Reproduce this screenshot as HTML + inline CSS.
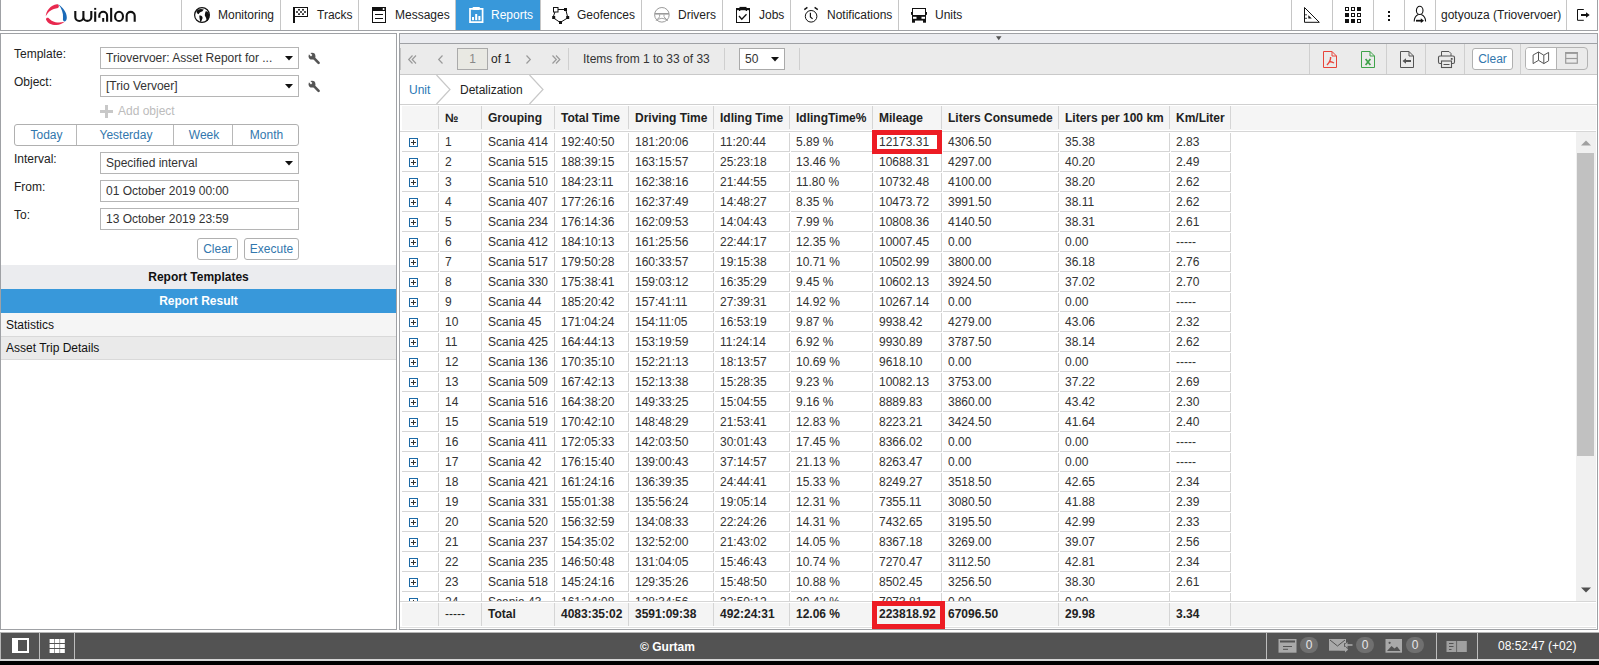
<!DOCTYPE html><html><head><meta charset="utf-8"><title>Wialon</title><style>
*{box-sizing:border-box;margin:0;padding:0}
html,body{width:1599px;height:665px;overflow:hidden;background:#fff}
body{position:relative;font-family:"Liberation Sans",sans-serif;font-size:12px;color:#333}
.a{position:absolute}
.t{position:absolute;line-height:14px;white-space:nowrap}
svg{position:absolute;overflow:visible}
.hl{position:absolute;height:1px}
.vl{position:absolute;width:1px}
</style></head><body>
<div class="a" style="left:0px;top:0px;width:1px;height:31px;background:#9fa1a5"></div>
<div class="a" style="left:0px;top:30px;width:1598px;height:1px;background:#9fa1a5"></div>
<div class="a" style="left:1597px;top:0px;width:1px;height:31px;background:#9fa1a5"></div>
<div class="a" style="left:181px;top:0px;width:1px;height:30px;background:#c6c6c6"></div>
<div class="a" style="left:280px;top:0px;width:1px;height:30px;background:#c6c6c6"></div>
<div class="a" style="left:358px;top:0px;width:1px;height:30px;background:#c6c6c6"></div>
<div class="a" style="left:455px;top:0px;width:1px;height:30px;background:#c6c6c6"></div>
<div class="a" style="left:540px;top:0px;width:1px;height:30px;background:#c6c6c6"></div>
<div class="a" style="left:641px;top:0px;width:1px;height:30px;background:#c6c6c6"></div>
<div class="a" style="left:722px;top:0px;width:1px;height:30px;background:#c6c6c6"></div>
<div class="a" style="left:790px;top:0px;width:1px;height:30px;background:#c6c6c6"></div>
<div class="a" style="left:898px;top:0px;width:1px;height:30px;background:#c6c6c6"></div>
<div class="a" style="left:1291px;top:0px;width:1px;height:30px;background:#c6c6c6"></div>
<div class="a" style="left:1332px;top:0px;width:1px;height:30px;background:#c6c6c6"></div>
<div class="a" style="left:1373px;top:0px;width:1px;height:30px;background:#c6c6c6"></div>
<div class="a" style="left:1404px;top:0px;width:1px;height:30px;background:#c6c6c6"></div>
<div class="a" style="left:1435px;top:0px;width:1px;height:30px;background:#c6c6c6"></div>
<div class="a" style="left:1566px;top:0px;width:1px;height:30px;background:#c6c6c6"></div>
<div class="a" style="left:456px;top:0px;width:84px;height:30px;background:#3898da"></div>
<svg style="left:40px;top:0px" width="100" height="30" viewBox="40 0 100 30">
<path d="M45.8 16.3 C45.8 11.5 50.5 5 57 4.3 C59 4.2 59.6 6.8 58 7.9 C52 8.8 48 11.5 45.8 16.3 Z" fill="#e8294f"/>
<path d="M46 19.5 C47.5 23.5 52 25.2 56.5 25 C59.5 24.9 62.5 23.7 64.6 21.8 C61.5 22.6 58.5 22.8 55.5 22.2 C52.5 21.5 50.5 20 48.8 18.2 C47.8 17.2 45.8 17.8 46 19.5 Z" fill="#e8294f"/>
<path d="M58.3 4.3 C62.8 7.5 67 12.3 66.8 17.8 C66.7 19.8 66 21.3 64.8 21.5 C63.3 21.5 62.6 20.3 63 18 C63.5 13 61.5 8.2 58.3 4.3 Z" fill="#1a6ab8"/>
<g fill="none" stroke="#111" stroke-width="2.1">
<path d="M75.3 11 V16.95 A4.05 4.05 0 0 0 83.4 16.95 V11 M83.4 16.95 A3.95 3.95 0 0 0 91.3 16.95 V11"/>
<path d="M95.2 11.5 V21.8"/>
<path d="M99.3 17.65 V15.65 A3.9 3.9 0 0 1 107.1 15.65 V21.8"/>
<path d="M111.15 7.9 V21.8"/>
<ellipse cx="119.03" cy="16.4" rx="3.95" ry="4.65"/>
<path d="M126.65 21.8 V15.75 A4.03 4.03 0 0 1 134.7 15.75 V21.8"/>
</g>
<rect x="94.2" y="7.9" width="2" height="1.9" fill="#111"/>
<rect x="102.2" y="18" width="2" height="3.8" fill="#111"/>
</svg>
<span class="t " style="left:218px;top:8px;color:#222">Monitoring</span>
<span class="t " style="left:317px;top:8px;color:#222">Tracks</span>
<span class="t " style="left:395px;top:8px;color:#222">Messages</span>
<span class="t " style="left:491px;top:8px;color:#fff">Reports</span>
<span class="t " style="left:577px;top:8px;color:#222">Geofences</span>
<span class="t " style="left:678px;top:8px;color:#222">Drivers</span>
<span class="t " style="left:759px;top:8px;color:#222">Jobs</span>
<span class="t " style="left:827px;top:8px;color:#222">Notifications</span>
<span class="t " style="left:935px;top:8px;color:#222">Units</span>
<svg style="left:194px;top:7px" width="16" height="16" viewBox="0 0 16 16"><circle cx="8" cy="8" r="7.4" fill="none" stroke="#111" stroke-width="1.2"/><path d="M2.3 4.2 C4 2 7 1.4 9.8 2.6 L8.2 4.6 C6.7 5 5.6 5.6 4.6 7.2 L3 6.2 Z M5.3 8.6 C7 8 8.6 9 8.6 11 C8.2 12.6 7.5 13.6 6.6 15.6 C6 13.6 5.3 11 5.3 8.6 Z M11.6 4.4 C13.2 4 14.6 5.6 15.2 7.6 L15.2 11 C14.6 13 13.6 14 12.6 14.6 C12.6 12 12 10 11 9 C10.6 8 11 6 11.6 4.4 Z" fill="#111"/></svg>
<svg style="left:290px;top:4px" width="20" height="21" viewBox="290 4 20 21"><rect x="293" y="7" width="2" height="16" fill="#111"/><rect x="293.5" y="7.5" width="14" height="9" fill="none" stroke="#111" stroke-width="1"/><rect x="298.15" y="8.950000000000001" width="1.7" height="1.7" fill="#111"/><rect x="302.15" y="8.950000000000001" width="1.7" height="1.7" fill="#111"/><rect x="296.15" y="11.15" width="1.7" height="1.7" fill="#111"/><rect x="300.15" y="11.15" width="1.7" height="1.7" fill="#111"/><rect x="304.15" y="11.15" width="1.7" height="1.7" fill="#111"/><rect x="298.15" y="13.25" width="1.7" height="1.7" fill="#111"/><rect x="302.15" y="13.25" width="1.7" height="1.7" fill="#111"/></svg>
<svg style="left:370px;top:5px" width="18" height="20" viewBox="370 5 18 20"><rect x="372.5" y="7.5" width="13" height="15" fill="none" stroke="#111" stroke-width="1"/><rect x="372" y="7" width="14" height="4" fill="#111"/>
<rect x="382.6" y="8.1" width="2" height="1.9" rx="0.8" fill="#fff"/><path d="M375 14.5 H383 M375 18.5 H383" stroke="#111" stroke-width="1"/></svg>
<svg style="left:466px;top:4px" width="20" height="21" viewBox="466 4 20 21"><path d="M473 8.9 H470 V22.1 H482.6 V8.9 H479.5" fill="none" stroke="#fff" stroke-width="1.7"/><rect x="472.5" y="7" width="7.5" height="3" rx="1" fill="#fff"/>
<rect x="472" y="17" width="2" height="3.2" fill="#fff"/><rect x="475.2" y="14" width="2" height="6.2" fill="#fff"/><rect x="478.4" y="16" width="2" height="4.2" fill="#fff"/></svg>
<svg style="left:550px;top:5px" width="22" height="21" viewBox="550 5 22 21"><path d="M558 9.5 H564.5 M566 10.5 L567.5 16.5 M567 18.3 L561 22 M559.5 22 L554 18.3 M553.5 16.2 L555 11.8" fill="none" stroke="#111" stroke-width="1"/>
<rect x="553.5" y="7.5" width="4.5" height="4.5" fill="#fff" stroke="#111" stroke-width="1"/>
<rect x="564" y="8" width="3" height="3" fill="#111"/><rect x="566.2" y="16" width="3" height="3" fill="#111"/><rect x="559" y="21" width="3" height="3" fill="#111"/><rect x="552.2" y="16" width="3" height="3" fill="#111"/></svg>
<svg style="left:652px;top:5px" width="20" height="20" viewBox="652 5 20 20"><circle cx="661.9" cy="14.8" r="7.3" fill="none" stroke="#9a9a9a" stroke-width="1"/>
<path d="M654.8 13.8 H669" stroke="#9a9a9a" stroke-width="1.6"/><path d="M659.6 14.5 V16.8 M664 14.5 V16.8" stroke="#9a9a9a" stroke-width="0.9"/>
<path d="M659.5 17 L656 20.8 M664.2 17 L667.7 20.8" stroke="#9a9a9a" stroke-width="1"/><path d="M657.8 19.3 Q661.9 17.2 666 19.3" fill="none" stroke="#9a9a9a" stroke-width="0.9"/></svg>
<svg style="left:734px;top:5px" width="18" height="20" viewBox="734 5 18 20"><rect x="736.5" y="8.5" width="13" height="14" fill="none" stroke="#111" stroke-width="1"/><rect x="736" y="8" width="14" height="2.2" fill="#111"/>
<rect x="739.5" y="6.9" width="7" height="2" fill="#111"/><rect x="739" y="10" width="1.3" height="1" fill="#111"/><rect x="745.7" y="10" width="1.3" height="1" fill="#111"/>
<path d="M739 16 L741.8 19.2 L746.5 14.3" fill="none" stroke="#111" stroke-width="1.3"/></svg>
<svg style="left:802px;top:5px" width="18" height="20" viewBox="802 5 18 20"><circle cx="811.1" cy="16.3" r="5.8" fill="none" stroke="#111" stroke-width="1"/>
<path d="M810.4 12.8 V17 L812.6 18.9" fill="none" stroke="#111" stroke-width="1.2"/>
<path d="M804.3 9.6 L807.4 7.4 M814.6 7.4 L817.8 9.6" stroke="#111" stroke-width="1.4"/></svg>
<svg style="left:909px;top:6px" width="20" height="19" viewBox="909 6 20 19"><rect x="912.5" y="8.5" width="13" height="7" fill="none" stroke="#111" stroke-width="1"/><rect x="912" y="15" width="14" height="5.6" fill="#111"/>
<rect x="913" y="16.8" width="3.5" height="2" fill="#fff"/><rect x="921.5" y="16.8" width="3.5" height="2" fill="#fff"/>
<rect x="912" y="20" width="3" height="2.7" fill="#111"/><rect x="923" y="20" width="3" height="2.7" fill="#111"/>
<rect x="911" y="12" width="1.5" height="2.8" fill="#111"/><rect x="925.5" y="12" width="1.5" height="2.8" fill="#111"/></svg>
<svg style="left:1302px;top:5px" width="20" height="20" viewBox="1302 5 20 20"><path d="M1304.5 7.5 V22.3 H1319.3 Z" fill="none" stroke="#111" stroke-width="1" stroke-linejoin="miter"/>
<path d="M1308.3 15.3 V18.6 H1311.8 Z" fill="#111"/><path d="M1304.5 14.8 H1307 M1304.5 18.3 H1307" stroke="#111" stroke-width="0.8"/></svg>
<svg style="left:1343px;top:5px" width="20" height="20" viewBox="1343 5 20 20"><rect x="1345.5" y="7.5" width="3" height="3" fill="none" stroke="#111" stroke-width="1"/><rect x="1351.5" y="7.5" width="3" height="3" fill="none" stroke="#111" stroke-width="1"/><rect x="1357" y="7" width="4" height="4" fill="#111"/><rect x="1345" y="13" width="4" height="4" fill="#111"/><rect x="1351.5" y="13.5" width="3" height="3" fill="none" stroke="#111" stroke-width="1"/><rect x="1357.5" y="13.5" width="3" height="3" fill="none" stroke="#111" stroke-width="1"/><rect x="1345" y="19" width="4" height="4" fill="#111"/><rect x="1351" y="19" width="4" height="4" fill="#111"/><rect x="1357.5" y="19.5" width="3" height="3" fill="none" stroke="#111" stroke-width="1"/></svg>
<svg style="left:1386px;top:9px" width="5" height="14" viewBox="1386 9 5 14"><rect x="1388" y="11" width="2" height="2" fill="#111"/><rect x="1388" y="15" width="2" height="2" fill="#111"/><rect x="1388" y="19" width="2" height="2" fill="#111"/></svg>
<svg style="left:1411px;top:4px" width="18" height="21" viewBox="1411 4 18 21"><ellipse cx="1419.7" cy="10.4" rx="3.3" ry="4.1" fill="none" stroke="#111" stroke-width="1.1"/>
<path d="M1414.2 21.6 C1414.2 17.5 1415.5 16 1418.3 14.6 M1425.6 21.6 C1425.6 17.5 1424.3 16 1421.3 14.6" fill="none" stroke="#111" stroke-width="1.1"/>
<path d="M1416 20.7 H1421.5" stroke="#111" stroke-width="1.8"/><path d="M1420.8 18.3 L1424 20.7 L1420.8 23.1 Z" fill="#111"/></svg>
<span class="t " style="left:1441px;top:8px;color:#222">gotyouza (Triovervoer)</span>
<svg style="left:1575px;top:7px" width="17" height="16" viewBox="1575 7 17 16"><path d="M1583.8 9.5 H1577.5 V20.3 H1583.8" fill="none" stroke="#111" stroke-width="1"/>
<path d="M1581 15 H1587" stroke="#111" stroke-width="2"/><path d="M1586 12.3 L1589.7 15 L1586 17.7 Z" fill="#111"/></svg>
<div class="a" style="left:0px;top:33px;width:397px;height:597px;border:1px solid #9fa1a5;background:#fff"></div>
<span class="t " style="left:14px;top:47px;color:#222">Template:</span>
<div class="a" style="left:100px;top:47px;width:199px;height:22px;border:1px solid #b5b5b5;background:#fff"></div>
<span class="t " style="left:106px;top:51px;color:#333">Triovervoer: Asset Report for ...</span>
<svg style="left:285px;top:56px" width="8" height="5" viewBox="0 0 8 5"><path d="M0 0 H8 L4 4.5Z" fill="#111"/></svg>
<svg style="left:308px;top:52px" width="13" height="13" viewBox="0 0 13 13">
<circle cx="4" cy="4.2" r="3.4" fill="#555"/><path d="M4.5 4.7 L10.6 10.9" stroke="#555" stroke-width="2.6" stroke-linecap="round"/>
<path d="M0.2 1.6 L1.6 0.2 L4.4 3 L3 4.4 Z" fill="#fff"/>
</svg>
<span class="t " style="left:14px;top:75px;color:#222">Object:</span>
<div class="a" style="left:100px;top:75px;width:199px;height:22px;border:1px solid #b5b5b5;background:#fff"></div>
<span class="t " style="left:106px;top:79px;color:#333">[Trio Vervoer]</span>
<svg style="left:285px;top:84px" width="8" height="5" viewBox="0 0 8 5"><path d="M0 0 H8 L4 4.5Z" fill="#111"/></svg>
<svg style="left:308px;top:80px" width="13" height="13" viewBox="0 0 13 13">
<circle cx="4" cy="4.2" r="3.4" fill="#555"/><path d="M4.5 4.7 L10.6 10.9" stroke="#555" stroke-width="2.6" stroke-linecap="round"/>
<path d="M0.2 1.6 L1.6 0.2 L4.4 3 L3 4.4 Z" fill="#fff"/>
</svg>
<svg style="left:100px;top:105px" width="13" height="13" viewBox="0 0 13 13"><rect x="5" y="0" width="3" height="13" fill="#c8c8c8"/><rect x="0" y="5" width="13" height="3" fill="#c8c8c8"/></svg>
<span class="t " style="left:118px;top:104px;color:#bcbcbc">Add object</span>
<div class="a" style="left:14px;top:124px;width:285px;height:22px;border:1px solid #b0b0b0;border-radius:3px;background:#fff"></div>
<div class="a" style="left:76px;top:125px;width:1px;height:20px;background:#b8b8b8"></div>
<div class="a" style="left:173px;top:125px;width:1px;height:20px;background:#b8b8b8"></div>
<div class="a" style="left:232px;top:125px;width:1px;height:20px;background:#b8b8b8"></div>
<span class="t" style="left:15px;width:61px;text-align:center;top:128px;color:#3277ad;padding-left:2px">Today</span>
<span class="t" style="left:77px;width:96px;text-align:center;top:128px;color:#3277ad;padding-left:2px">Yesterday</span>
<span class="t" style="left:174px;width:58px;text-align:center;top:128px;color:#3277ad;padding-left:2px">Week</span>
<span class="t" style="left:233px;width:65px;text-align:center;top:128px;color:#3277ad;padding-left:2px">Month</span>
<span class="t " style="left:14px;top:152px;color:#222">Interval:</span>
<div class="a" style="left:100px;top:152px;width:199px;height:22px;border:1px solid #b5b5b5;background:#fff"></div>
<span class="t " style="left:106px;top:156px;color:#333">Specified interval</span>
<svg style="left:285px;top:161px" width="8" height="5" viewBox="0 0 8 5"><path d="M0 0 H8 L4 4.5Z" fill="#111"/></svg>
<span class="t " style="left:14px;top:180px;color:#222">From:</span>
<div class="a" style="left:100px;top:180px;width:199px;height:22px;border:1px solid #b5b5b5;background:#fff"></div>
<span class="t " style="left:106px;top:184px;color:#333">01 October 2019 00:00</span>
<span class="t " style="left:14px;top:208px;color:#222">To:</span>
<div class="a" style="left:100px;top:208px;width:199px;height:22px;border:1px solid #b5b5b5;background:#fff"></div>
<span class="t " style="left:106px;top:212px;color:#333">13 October 2019 23:59</span>
<div class="a" style="left:197px;top:238px;width:41px;height:22px;border:1px solid #b0b0b0;border-radius:3px;background:#fff"></div>
<span class="t" style="left:197px;width:41px;text-align:center;top:242px;color:#3277ad">Clear</span>
<div class="a" style="left:244px;top:238px;width:55px;height:22px;border:1px solid #b0b0b0;border-radius:3px;background:#fff"></div>
<span class="t" style="left:244px;width:55px;text-align:center;top:242px;color:#3277ad">Execute</span>
<div class="a" style="left:1px;top:265px;width:395px;height:24px;background:#ebecef"></div>
<span class="t" style="left:1px;width:395px;text-align:center;top:270px;font-weight:bold;color:#111">Report Templates</span>
<div class="a" style="left:1px;top:289px;width:395px;height:24px;background:#3898da"></div>
<span class="t" style="left:1px;width:395px;text-align:center;top:294px;font-weight:bold;color:#fff">Report Result</span>
<div class="a" style="left:1px;top:313px;width:395px;height:24px;background:#f5f5f5;border-bottom:1px solid #d9d9d9"></div>
<span class="t " style="left:6px;top:318px;color:#111">Statistics</span>
<div class="a" style="left:1px;top:337px;width:395px;height:23px;background:#eaeaea;border-bottom:1px solid #d9d9d9"></div>
<span class="t " style="left:6px;top:341px;color:#111">Asset Trip Details</span>
<div class="a" style="left:399px;top:33px;width:1199px;height:597px;border:1px solid #9fa1a5;background:#fff"></div>
<div class="a" style="left:400px;top:34px;width:1197px;height:9px;background:#ebecf0"></div>
<div class="a" style="left:400px;top:43px;width:1197px;height:1px;background:#9fa1a5"></div>
<svg style="left:996px;top:36px" width="6" height="5" viewBox="0 0 6 5"><path d="M0 0.3H5.5L2.75 4.3Z" fill="#555"/></svg>
<div class="a" style="left:400px;top:44px;width:1197px;height:30px;background:#ebebeb"></div>
<div class="a" style="left:400px;top:74px;width:1197px;height:1px;background:#c9c9c9"></div>
<div class="a" style="left:568px;top:48px;width:1px;height:22px;background:#cfcfcf"></div>
<div class="a" style="left:724px;top:48px;width:1px;height:22px;background:#cfcfcf"></div>
<div class="a" style="left:799px;top:48px;width:1px;height:22px;background:#cfcfcf"></div>
<div class="a" style="left:400px;top:48px;width:1px;height:22px;background:#c4c4c4"></div>
<div class="a" style="left:1309px;top:44px;width:1px;height:30px;background:#cfcfcf"></div>
<div class="a" style="left:1386px;top:44px;width:1px;height:30px;background:#cfcfcf"></div>
<div class="a" style="left:1425px;top:44px;width:1px;height:30px;background:#cfcfcf"></div>
<div class="a" style="left:1464px;top:44px;width:1px;height:30px;background:#cfcfcf"></div>
<div class="a" style="left:1520px;top:44px;width:1px;height:30px;background:#cfcfcf"></div>
<svg style="left:408px;top:55px" width="10" height="9" viewBox="0 0 10 9"><path d="M4.5 0.5 L0.7 4.5 L4.5 8.5" fill="none" stroke="#9a9a9a" stroke-width="1.2"/><path d="M8 0.5 L4.2 4.5 L8 8.5" fill="none" stroke="#9a9a9a" stroke-width="1.2"/></svg>
<svg style="left:438px;top:55px" width="10" height="9" viewBox="0 0 10 9"><path d="M4.5 0.5 L0.7 4.5 L4.5 8.5" fill="none" stroke="#9a9a9a" stroke-width="1.2"/></svg>
<svg style="left:526px;top:55px" width="10" height="9" viewBox="0 0 10 9"><path d="M0.5 0.5 L4.3 4.5 L0.5 8.5" fill="none" stroke="#9a9a9a" stroke-width="1.2"/></svg>
<svg style="left:552px;top:55px" width="10" height="9" viewBox="0 0 10 9"><path d="M0.5 0.5 L4.3 4.5 L0.5 8.5" fill="none" stroke="#9a9a9a" stroke-width="1.2"/><path d="M4 0.5 L7.8 4.5 L4 8.5" fill="none" stroke="#9a9a9a" stroke-width="1.2"/></svg>
<div class="a" style="left:457px;top:48px;width:31px;height:22px;border:1px solid #aaa;background:#e9e9e3"></div>
<span class="t" style="left:457px;width:31px;text-align:center;top:52px;color:#888">1</span>
<span class="t " style="left:491px;top:52px;color:#222">of 1</span>
<span class="t " style="left:583px;top:52px;color:#333">Items from 1 to 33 of 33</span>
<div class="a" style="left:739px;top:48px;width:46px;height:22px;border:1px solid #aaa;background:#fff"></div>
<span class="t " style="left:745px;top:52px;color:#333">50</span>
<svg style="left:771px;top:57px" width="8" height="5" viewBox="0 0 8 5"><path d="M0 0 H8 L4 4.5Z" fill="#111"/></svg>
<svg style="left:1323px;top:51px" width="15" height="18" viewBox="0 0 15 18">
<path d="M0.5 0.5 H9 L13.5 5 V16.5 H0.5 Z M9 0.5 V5 H13.5" fill="none" stroke="#e8443a" stroke-width="1"/><path d="M7.6 6 C7.8 9 6.5 11.5 4 14 M6.8 10.5 C8.2 10.8 9.8 11.3 11 12" fill="none" stroke="#e8443a" stroke-width="1.4"/></svg>
<svg style="left:1361px;top:51px" width="15" height="18" viewBox="0 0 15 18">
<path d="M0.5 0.5 H9 L13.5 5 V16.5 H0.5 Z M9 0.5 V5 H13.5" fill="none" stroke="#3fa34a" stroke-width="1"/><path d="M4.6 8 L9.4 14 M9.4 8 L4.6 14" fill="none" stroke="#3fa34a" stroke-width="1.7"/></svg>
<svg style="left:1400px;top:51px" width="15" height="18" viewBox="0 0 15 18">
<path d="M0.5 0.5 H9 L13.5 5 V16.5 H0.5 Z M9 0.5 V5 H13.5" fill="none" stroke="#555" stroke-width="1"/><path d="M5 10 H11" stroke="#555" stroke-width="2"/><path d="M2.5 10 L6 7.3 V12.7 Z" fill="#555"/></svg>
<svg style="left:1438px;top:51px" width="18" height="18" viewBox="0 0 18 18">
<path d="M3.5 5 V0.5 H11 L13 2.5 V5" fill="none" stroke="#555" stroke-width="1"/>
<path d="M3.5 12.5 H2 Q0.5 12.5 0.5 11 V6.5 Q0.5 5 2 5 H15 Q16.5 5 16.5 6.5 V11 Q16.5 12.5 15 12.5 H13.5" fill="none" stroke="#555" stroke-width="1.1"/>
<rect x="3.5" y="10" width="10" height="6.5" fill="#ebebeb" stroke="#555" stroke-width="1.1"/>
<rect x="12.8" y="7" width="1.8" height="1.8" fill="#555"/><path d="M5.5 13.5 H11.5" stroke="#555" stroke-width="1"/>
</svg>
<div class="a" style="left:1472px;top:48px;width:41px;height:22px;border:1px solid #b0b0b0;border-radius:3px;background:#fff"></div>
<span class="t" style="left:1472px;width:41px;text-align:center;top:52px;color:#3277ad">Clear</span>
<div class="a" style="left:1525px;top:47px;width:63px;height:23px;border:1px solid #b3b3b3;border-radius:4px;background:#ebebeb"></div>
<div class="a" style="left:1526px;top:48px;width:30px;height:21px;background:#fff;border-radius:3px 0 0 3px"></div>
<div class="a" style="left:1556px;top:48px;width:1px;height:21px;background:#b3b3b3"></div>
<svg style="left:1530px;top:50px" width="22" height="16" viewBox="1530 50 22 16">
<path d="M1533.1 55 L1538.5 52 L1543.8 55.2 L1548.6 52.4 V60.8 L1543.8 63.6 L1538.5 60.3 L1533.1 63.6 Z M1538.5 52 V60.3 M1543.8 55.2 V63.6" fill="none" stroke="#555" stroke-width="1" stroke-linejoin="round"/></svg>
<svg style="left:1563px;top:50px" width="17" height="16" viewBox="1563 50 17 16">
<rect x="1565.7" y="52.6" width="11.6" height="10.6" fill="none" stroke="#9a9a9a" stroke-width="1.2"/><rect x="1565.2" y="52.1" width="12.6" height="1.8" fill="#9a9a9a"/><path d="M1565.7 58.5 H1577.3" stroke="#9a9a9a" stroke-width="1.2"/></svg>
<span class="t " style="left:409px;top:83px;color:#2a78b5">Unit</span>
<svg style="left:436px;top:75px" width="15" height="29" viewBox="0 0 15 29"><path d="M0.5 0 L14 14.5 L0.5 29" fill="none" stroke="#c8c8c8" stroke-width="1.2"/></svg>
<span class="t " style="left:460px;top:83px;color:#222">Detalization</span>
<svg style="left:529px;top:75px" width="15" height="29" viewBox="0 0 15 29"><path d="M0.5 0 L14 14.5 L0.5 29" fill="none" stroke="#c8c8c8" stroke-width="1.2"/></svg>
<div class="a" style="left:400px;top:104px;width:1197px;height:1px;background:#d0d0d0"></div>
<div class="a" style="left:400px;top:105px;width:1196px;height:25px;background:#fff"></div>
<div class="a" style="left:402px;top:106px;width:1194px;height:24px;background:#f5f5f5"></div>
<div class="a" style="left:438px;top:106px;width:1px;height:23px;background:#d5d5d5"></div>
<div class="a" style="left:481px;top:106px;width:1px;height:23px;background:#d5d5d5"></div>
<div class="a" style="left:554px;top:106px;width:1px;height:23px;background:#d5d5d5"></div>
<div class="a" style="left:628px;top:106px;width:1px;height:23px;background:#d5d5d5"></div>
<div class="a" style="left:713px;top:106px;width:1px;height:23px;background:#d5d5d5"></div>
<div class="a" style="left:789px;top:106px;width:1px;height:23px;background:#d5d5d5"></div>
<div class="a" style="left:872px;top:106px;width:1px;height:23px;background:#d5d5d5"></div>
<div class="a" style="left:941px;top:106px;width:1px;height:23px;background:#d5d5d5"></div>
<div class="a" style="left:1058px;top:106px;width:1px;height:23px;background:#d5d5d5"></div>
<div class="a" style="left:1169px;top:106px;width:1px;height:23px;background:#d5d5d5"></div>
<div class="a" style="left:1230px;top:106px;width:1px;height:23px;background:#d5d5d5"></div>
<span class="t " style="left:445px;top:111px;font-weight:bold;color:#222">№</span>
<span class="t " style="left:488px;top:111px;font-weight:bold;color:#222">Grouping</span>
<span class="t " style="left:561px;top:111px;font-weight:bold;color:#222">Total Time</span>
<span class="t " style="left:635px;top:111px;font-weight:bold;color:#222">Driving Time</span>
<span class="t " style="left:720px;top:111px;font-weight:bold;color:#222">Idling Time</span>
<span class="t " style="left:796px;top:111px;font-weight:bold;color:#222">IdlingTime%</span>
<span class="t " style="left:879px;top:111px;font-weight:bold;color:#222">Mileage</span>
<span class="t " style="left:948px;top:111px;font-weight:bold;color:#222">Liters Consumede</span>
<span class="t " style="left:1065px;top:111px;font-weight:bold;color:#222">Liters per 100 km</span>
<span class="t " style="left:1176px;top:111px;font-weight:bold;color:#222">Km/Liter</span>
<div class="a" style="left:400px;top:131px;width:1196px;height:1px;background:#d6d6d6"></div>
<div class="a" style="left:400px;top:132px;width:1176px;height:469px;overflow:hidden">
<div class="a" style="left:2px;top:1px;width:37px;height:19px;border-right:1px solid #d5d5d5;border-bottom:1px solid #d5d5d5"></div>
<div class="a" style="left:40px;top:1px;width:42px;height:19px;border-right:1px solid #d5d5d5;border-bottom:1px solid #d5d5d5"></div>
<div class="a" style="left:83px;top:1px;width:72px;height:19px;border-right:1px solid #d5d5d5;border-bottom:1px solid #d5d5d5"></div>
<div class="a" style="left:156px;top:1px;width:73px;height:19px;border-right:1px solid #d5d5d5;border-bottom:1px solid #d5d5d5"></div>
<div class="a" style="left:230px;top:1px;width:84px;height:19px;border-right:1px solid #d5d5d5;border-bottom:1px solid #d5d5d5"></div>
<div class="a" style="left:315px;top:1px;width:75px;height:19px;border-right:1px solid #d5d5d5;border-bottom:1px solid #d5d5d5"></div>
<div class="a" style="left:391px;top:1px;width:82px;height:19px;border-right:1px solid #d5d5d5;border-bottom:1px solid #d5d5d5"></div>
<div class="a" style="left:474px;top:1px;width:68px;height:19px;border-right:1px solid #d5d5d5;border-bottom:1px solid #d5d5d5"></div>
<div class="a" style="left:543px;top:1px;width:116px;height:19px;border-right:1px solid #d5d5d5;border-bottom:1px solid #d5d5d5"></div>
<div class="a" style="left:660px;top:1px;width:110px;height:19px;border-right:1px solid #d5d5d5;border-bottom:1px solid #d5d5d5"></div>
<div class="a" style="left:771px;top:1px;width:60px;height:19px;border-right:1px solid #d5d5d5;border-bottom:1px solid #d5d5d5"></div>
<svg style="left:9px;top:6px" width="9" height="9" viewBox="0 0 9 9"><rect x="0.5" y="0.5" width="8" height="8" fill="#fff" stroke="#1b69a6" stroke-width="1"/><path d="M4.5 2 V7 M2 4.5 H7" stroke="#333" stroke-width="1"/></svg>
<span class="t" style="left:45px;top:3px;color:#333">1</span>
<span class="t" style="left:88px;top:3px;color:#333">Scania 414</span>
<span class="t" style="left:161px;top:3px;color:#333">192:40:50</span>
<span class="t" style="left:235px;top:3px;color:#333">181:20:06</span>
<span class="t" style="left:320px;top:3px;color:#333">11:20:44</span>
<span class="t" style="left:396px;top:3px;color:#333">5.89 %</span>
<span class="t" style="left:479px;top:3px;color:#333">12173.31</span>
<span class="t" style="left:548px;top:3px;color:#333">4306.50</span>
<span class="t" style="left:665px;top:3px;color:#333">35.38</span>
<span class="t" style="left:776px;top:3px;color:#333">2.83</span>
<div class="a" style="left:2px;top:21px;width:37px;height:19px;border-right:1px solid #d5d5d5;border-bottom:1px solid #d5d5d5"></div>
<div class="a" style="left:40px;top:21px;width:42px;height:19px;border-right:1px solid #d5d5d5;border-bottom:1px solid #d5d5d5"></div>
<div class="a" style="left:83px;top:21px;width:72px;height:19px;border-right:1px solid #d5d5d5;border-bottom:1px solid #d5d5d5"></div>
<div class="a" style="left:156px;top:21px;width:73px;height:19px;border-right:1px solid #d5d5d5;border-bottom:1px solid #d5d5d5"></div>
<div class="a" style="left:230px;top:21px;width:84px;height:19px;border-right:1px solid #d5d5d5;border-bottom:1px solid #d5d5d5"></div>
<div class="a" style="left:315px;top:21px;width:75px;height:19px;border-right:1px solid #d5d5d5;border-bottom:1px solid #d5d5d5"></div>
<div class="a" style="left:391px;top:21px;width:82px;height:19px;border-right:1px solid #d5d5d5;border-bottom:1px solid #d5d5d5"></div>
<div class="a" style="left:474px;top:21px;width:68px;height:19px;border-right:1px solid #d5d5d5;border-bottom:1px solid #d5d5d5"></div>
<div class="a" style="left:543px;top:21px;width:116px;height:19px;border-right:1px solid #d5d5d5;border-bottom:1px solid #d5d5d5"></div>
<div class="a" style="left:660px;top:21px;width:110px;height:19px;border-right:1px solid #d5d5d5;border-bottom:1px solid #d5d5d5"></div>
<div class="a" style="left:771px;top:21px;width:60px;height:19px;border-right:1px solid #d5d5d5;border-bottom:1px solid #d5d5d5"></div>
<svg style="left:9px;top:26px" width="9" height="9" viewBox="0 0 9 9"><rect x="0.5" y="0.5" width="8" height="8" fill="#fff" stroke="#1b69a6" stroke-width="1"/><path d="M4.5 2 V7 M2 4.5 H7" stroke="#333" stroke-width="1"/></svg>
<span class="t" style="left:45px;top:23px;color:#333">2</span>
<span class="t" style="left:88px;top:23px;color:#333">Scania 515</span>
<span class="t" style="left:161px;top:23px;color:#333">188:39:15</span>
<span class="t" style="left:235px;top:23px;color:#333">163:15:57</span>
<span class="t" style="left:320px;top:23px;color:#333">25:23:18</span>
<span class="t" style="left:396px;top:23px;color:#333">13.46 %</span>
<span class="t" style="left:479px;top:23px;color:#333">10688.31</span>
<span class="t" style="left:548px;top:23px;color:#333">4297.00</span>
<span class="t" style="left:665px;top:23px;color:#333">40.20</span>
<span class="t" style="left:776px;top:23px;color:#333">2.49</span>
<div class="a" style="left:2px;top:41px;width:37px;height:19px;border-right:1px solid #d5d5d5;border-bottom:1px solid #d5d5d5"></div>
<div class="a" style="left:40px;top:41px;width:42px;height:19px;border-right:1px solid #d5d5d5;border-bottom:1px solid #d5d5d5"></div>
<div class="a" style="left:83px;top:41px;width:72px;height:19px;border-right:1px solid #d5d5d5;border-bottom:1px solid #d5d5d5"></div>
<div class="a" style="left:156px;top:41px;width:73px;height:19px;border-right:1px solid #d5d5d5;border-bottom:1px solid #d5d5d5"></div>
<div class="a" style="left:230px;top:41px;width:84px;height:19px;border-right:1px solid #d5d5d5;border-bottom:1px solid #d5d5d5"></div>
<div class="a" style="left:315px;top:41px;width:75px;height:19px;border-right:1px solid #d5d5d5;border-bottom:1px solid #d5d5d5"></div>
<div class="a" style="left:391px;top:41px;width:82px;height:19px;border-right:1px solid #d5d5d5;border-bottom:1px solid #d5d5d5"></div>
<div class="a" style="left:474px;top:41px;width:68px;height:19px;border-right:1px solid #d5d5d5;border-bottom:1px solid #d5d5d5"></div>
<div class="a" style="left:543px;top:41px;width:116px;height:19px;border-right:1px solid #d5d5d5;border-bottom:1px solid #d5d5d5"></div>
<div class="a" style="left:660px;top:41px;width:110px;height:19px;border-right:1px solid #d5d5d5;border-bottom:1px solid #d5d5d5"></div>
<div class="a" style="left:771px;top:41px;width:60px;height:19px;border-right:1px solid #d5d5d5;border-bottom:1px solid #d5d5d5"></div>
<svg style="left:9px;top:46px" width="9" height="9" viewBox="0 0 9 9"><rect x="0.5" y="0.5" width="8" height="8" fill="#fff" stroke="#1b69a6" stroke-width="1"/><path d="M4.5 2 V7 M2 4.5 H7" stroke="#333" stroke-width="1"/></svg>
<span class="t" style="left:45px;top:43px;color:#333">3</span>
<span class="t" style="left:88px;top:43px;color:#333">Scania 510</span>
<span class="t" style="left:161px;top:43px;color:#333">184:23:11</span>
<span class="t" style="left:235px;top:43px;color:#333">162:38:16</span>
<span class="t" style="left:320px;top:43px;color:#333">21:44:55</span>
<span class="t" style="left:396px;top:43px;color:#333">11.80 %</span>
<span class="t" style="left:479px;top:43px;color:#333">10732.48</span>
<span class="t" style="left:548px;top:43px;color:#333">4100.00</span>
<span class="t" style="left:665px;top:43px;color:#333">38.20</span>
<span class="t" style="left:776px;top:43px;color:#333">2.62</span>
<div class="a" style="left:2px;top:61px;width:37px;height:19px;border-right:1px solid #d5d5d5;border-bottom:1px solid #d5d5d5"></div>
<div class="a" style="left:40px;top:61px;width:42px;height:19px;border-right:1px solid #d5d5d5;border-bottom:1px solid #d5d5d5"></div>
<div class="a" style="left:83px;top:61px;width:72px;height:19px;border-right:1px solid #d5d5d5;border-bottom:1px solid #d5d5d5"></div>
<div class="a" style="left:156px;top:61px;width:73px;height:19px;border-right:1px solid #d5d5d5;border-bottom:1px solid #d5d5d5"></div>
<div class="a" style="left:230px;top:61px;width:84px;height:19px;border-right:1px solid #d5d5d5;border-bottom:1px solid #d5d5d5"></div>
<div class="a" style="left:315px;top:61px;width:75px;height:19px;border-right:1px solid #d5d5d5;border-bottom:1px solid #d5d5d5"></div>
<div class="a" style="left:391px;top:61px;width:82px;height:19px;border-right:1px solid #d5d5d5;border-bottom:1px solid #d5d5d5"></div>
<div class="a" style="left:474px;top:61px;width:68px;height:19px;border-right:1px solid #d5d5d5;border-bottom:1px solid #d5d5d5"></div>
<div class="a" style="left:543px;top:61px;width:116px;height:19px;border-right:1px solid #d5d5d5;border-bottom:1px solid #d5d5d5"></div>
<div class="a" style="left:660px;top:61px;width:110px;height:19px;border-right:1px solid #d5d5d5;border-bottom:1px solid #d5d5d5"></div>
<div class="a" style="left:771px;top:61px;width:60px;height:19px;border-right:1px solid #d5d5d5;border-bottom:1px solid #d5d5d5"></div>
<svg style="left:9px;top:66px" width="9" height="9" viewBox="0 0 9 9"><rect x="0.5" y="0.5" width="8" height="8" fill="#fff" stroke="#1b69a6" stroke-width="1"/><path d="M4.5 2 V7 M2 4.5 H7" stroke="#333" stroke-width="1"/></svg>
<span class="t" style="left:45px;top:63px;color:#333">4</span>
<span class="t" style="left:88px;top:63px;color:#333">Scania 407</span>
<span class="t" style="left:161px;top:63px;color:#333">177:26:16</span>
<span class="t" style="left:235px;top:63px;color:#333">162:37:49</span>
<span class="t" style="left:320px;top:63px;color:#333">14:48:27</span>
<span class="t" style="left:396px;top:63px;color:#333">8.35 %</span>
<span class="t" style="left:479px;top:63px;color:#333">10473.72</span>
<span class="t" style="left:548px;top:63px;color:#333">3991.50</span>
<span class="t" style="left:665px;top:63px;color:#333">38.11</span>
<span class="t" style="left:776px;top:63px;color:#333">2.62</span>
<div class="a" style="left:2px;top:81px;width:37px;height:19px;border-right:1px solid #d5d5d5;border-bottom:1px solid #d5d5d5"></div>
<div class="a" style="left:40px;top:81px;width:42px;height:19px;border-right:1px solid #d5d5d5;border-bottom:1px solid #d5d5d5"></div>
<div class="a" style="left:83px;top:81px;width:72px;height:19px;border-right:1px solid #d5d5d5;border-bottom:1px solid #d5d5d5"></div>
<div class="a" style="left:156px;top:81px;width:73px;height:19px;border-right:1px solid #d5d5d5;border-bottom:1px solid #d5d5d5"></div>
<div class="a" style="left:230px;top:81px;width:84px;height:19px;border-right:1px solid #d5d5d5;border-bottom:1px solid #d5d5d5"></div>
<div class="a" style="left:315px;top:81px;width:75px;height:19px;border-right:1px solid #d5d5d5;border-bottom:1px solid #d5d5d5"></div>
<div class="a" style="left:391px;top:81px;width:82px;height:19px;border-right:1px solid #d5d5d5;border-bottom:1px solid #d5d5d5"></div>
<div class="a" style="left:474px;top:81px;width:68px;height:19px;border-right:1px solid #d5d5d5;border-bottom:1px solid #d5d5d5"></div>
<div class="a" style="left:543px;top:81px;width:116px;height:19px;border-right:1px solid #d5d5d5;border-bottom:1px solid #d5d5d5"></div>
<div class="a" style="left:660px;top:81px;width:110px;height:19px;border-right:1px solid #d5d5d5;border-bottom:1px solid #d5d5d5"></div>
<div class="a" style="left:771px;top:81px;width:60px;height:19px;border-right:1px solid #d5d5d5;border-bottom:1px solid #d5d5d5"></div>
<svg style="left:9px;top:86px" width="9" height="9" viewBox="0 0 9 9"><rect x="0.5" y="0.5" width="8" height="8" fill="#fff" stroke="#1b69a6" stroke-width="1"/><path d="M4.5 2 V7 M2 4.5 H7" stroke="#333" stroke-width="1"/></svg>
<span class="t" style="left:45px;top:83px;color:#333">5</span>
<span class="t" style="left:88px;top:83px;color:#333">Scania 234</span>
<span class="t" style="left:161px;top:83px;color:#333">176:14:36</span>
<span class="t" style="left:235px;top:83px;color:#333">162:09:53</span>
<span class="t" style="left:320px;top:83px;color:#333">14:04:43</span>
<span class="t" style="left:396px;top:83px;color:#333">7.99 %</span>
<span class="t" style="left:479px;top:83px;color:#333">10808.36</span>
<span class="t" style="left:548px;top:83px;color:#333">4140.50</span>
<span class="t" style="left:665px;top:83px;color:#333">38.31</span>
<span class="t" style="left:776px;top:83px;color:#333">2.61</span>
<div class="a" style="left:2px;top:101px;width:37px;height:19px;border-right:1px solid #d5d5d5;border-bottom:1px solid #d5d5d5"></div>
<div class="a" style="left:40px;top:101px;width:42px;height:19px;border-right:1px solid #d5d5d5;border-bottom:1px solid #d5d5d5"></div>
<div class="a" style="left:83px;top:101px;width:72px;height:19px;border-right:1px solid #d5d5d5;border-bottom:1px solid #d5d5d5"></div>
<div class="a" style="left:156px;top:101px;width:73px;height:19px;border-right:1px solid #d5d5d5;border-bottom:1px solid #d5d5d5"></div>
<div class="a" style="left:230px;top:101px;width:84px;height:19px;border-right:1px solid #d5d5d5;border-bottom:1px solid #d5d5d5"></div>
<div class="a" style="left:315px;top:101px;width:75px;height:19px;border-right:1px solid #d5d5d5;border-bottom:1px solid #d5d5d5"></div>
<div class="a" style="left:391px;top:101px;width:82px;height:19px;border-right:1px solid #d5d5d5;border-bottom:1px solid #d5d5d5"></div>
<div class="a" style="left:474px;top:101px;width:68px;height:19px;border-right:1px solid #d5d5d5;border-bottom:1px solid #d5d5d5"></div>
<div class="a" style="left:543px;top:101px;width:116px;height:19px;border-right:1px solid #d5d5d5;border-bottom:1px solid #d5d5d5"></div>
<div class="a" style="left:660px;top:101px;width:110px;height:19px;border-right:1px solid #d5d5d5;border-bottom:1px solid #d5d5d5"></div>
<div class="a" style="left:771px;top:101px;width:60px;height:19px;border-right:1px solid #d5d5d5;border-bottom:1px solid #d5d5d5"></div>
<svg style="left:9px;top:106px" width="9" height="9" viewBox="0 0 9 9"><rect x="0.5" y="0.5" width="8" height="8" fill="#fff" stroke="#1b69a6" stroke-width="1"/><path d="M4.5 2 V7 M2 4.5 H7" stroke="#333" stroke-width="1"/></svg>
<span class="t" style="left:45px;top:103px;color:#333">6</span>
<span class="t" style="left:88px;top:103px;color:#333">Scania 412</span>
<span class="t" style="left:161px;top:103px;color:#333">184:10:13</span>
<span class="t" style="left:235px;top:103px;color:#333">161:25:56</span>
<span class="t" style="left:320px;top:103px;color:#333">22:44:17</span>
<span class="t" style="left:396px;top:103px;color:#333">12.35 %</span>
<span class="t" style="left:479px;top:103px;color:#333">10007.45</span>
<span class="t" style="left:548px;top:103px;color:#333">0.00</span>
<span class="t" style="left:665px;top:103px;color:#333">0.00</span>
<span class="t" style="left:776px;top:103px;color:#333">-----</span>
<div class="a" style="left:2px;top:121px;width:37px;height:19px;border-right:1px solid #d5d5d5;border-bottom:1px solid #d5d5d5"></div>
<div class="a" style="left:40px;top:121px;width:42px;height:19px;border-right:1px solid #d5d5d5;border-bottom:1px solid #d5d5d5"></div>
<div class="a" style="left:83px;top:121px;width:72px;height:19px;border-right:1px solid #d5d5d5;border-bottom:1px solid #d5d5d5"></div>
<div class="a" style="left:156px;top:121px;width:73px;height:19px;border-right:1px solid #d5d5d5;border-bottom:1px solid #d5d5d5"></div>
<div class="a" style="left:230px;top:121px;width:84px;height:19px;border-right:1px solid #d5d5d5;border-bottom:1px solid #d5d5d5"></div>
<div class="a" style="left:315px;top:121px;width:75px;height:19px;border-right:1px solid #d5d5d5;border-bottom:1px solid #d5d5d5"></div>
<div class="a" style="left:391px;top:121px;width:82px;height:19px;border-right:1px solid #d5d5d5;border-bottom:1px solid #d5d5d5"></div>
<div class="a" style="left:474px;top:121px;width:68px;height:19px;border-right:1px solid #d5d5d5;border-bottom:1px solid #d5d5d5"></div>
<div class="a" style="left:543px;top:121px;width:116px;height:19px;border-right:1px solid #d5d5d5;border-bottom:1px solid #d5d5d5"></div>
<div class="a" style="left:660px;top:121px;width:110px;height:19px;border-right:1px solid #d5d5d5;border-bottom:1px solid #d5d5d5"></div>
<div class="a" style="left:771px;top:121px;width:60px;height:19px;border-right:1px solid #d5d5d5;border-bottom:1px solid #d5d5d5"></div>
<svg style="left:9px;top:126px" width="9" height="9" viewBox="0 0 9 9"><rect x="0.5" y="0.5" width="8" height="8" fill="#fff" stroke="#1b69a6" stroke-width="1"/><path d="M4.5 2 V7 M2 4.5 H7" stroke="#333" stroke-width="1"/></svg>
<span class="t" style="left:45px;top:123px;color:#333">7</span>
<span class="t" style="left:88px;top:123px;color:#333">Scania 517</span>
<span class="t" style="left:161px;top:123px;color:#333">179:50:28</span>
<span class="t" style="left:235px;top:123px;color:#333">160:33:57</span>
<span class="t" style="left:320px;top:123px;color:#333">19:15:38</span>
<span class="t" style="left:396px;top:123px;color:#333">10.71 %</span>
<span class="t" style="left:479px;top:123px;color:#333">10502.99</span>
<span class="t" style="left:548px;top:123px;color:#333">3800.00</span>
<span class="t" style="left:665px;top:123px;color:#333">36.18</span>
<span class="t" style="left:776px;top:123px;color:#333">2.76</span>
<div class="a" style="left:2px;top:141px;width:37px;height:19px;border-right:1px solid #d5d5d5;border-bottom:1px solid #d5d5d5"></div>
<div class="a" style="left:40px;top:141px;width:42px;height:19px;border-right:1px solid #d5d5d5;border-bottom:1px solid #d5d5d5"></div>
<div class="a" style="left:83px;top:141px;width:72px;height:19px;border-right:1px solid #d5d5d5;border-bottom:1px solid #d5d5d5"></div>
<div class="a" style="left:156px;top:141px;width:73px;height:19px;border-right:1px solid #d5d5d5;border-bottom:1px solid #d5d5d5"></div>
<div class="a" style="left:230px;top:141px;width:84px;height:19px;border-right:1px solid #d5d5d5;border-bottom:1px solid #d5d5d5"></div>
<div class="a" style="left:315px;top:141px;width:75px;height:19px;border-right:1px solid #d5d5d5;border-bottom:1px solid #d5d5d5"></div>
<div class="a" style="left:391px;top:141px;width:82px;height:19px;border-right:1px solid #d5d5d5;border-bottom:1px solid #d5d5d5"></div>
<div class="a" style="left:474px;top:141px;width:68px;height:19px;border-right:1px solid #d5d5d5;border-bottom:1px solid #d5d5d5"></div>
<div class="a" style="left:543px;top:141px;width:116px;height:19px;border-right:1px solid #d5d5d5;border-bottom:1px solid #d5d5d5"></div>
<div class="a" style="left:660px;top:141px;width:110px;height:19px;border-right:1px solid #d5d5d5;border-bottom:1px solid #d5d5d5"></div>
<div class="a" style="left:771px;top:141px;width:60px;height:19px;border-right:1px solid #d5d5d5;border-bottom:1px solid #d5d5d5"></div>
<svg style="left:9px;top:146px" width="9" height="9" viewBox="0 0 9 9"><rect x="0.5" y="0.5" width="8" height="8" fill="#fff" stroke="#1b69a6" stroke-width="1"/><path d="M4.5 2 V7 M2 4.5 H7" stroke="#333" stroke-width="1"/></svg>
<span class="t" style="left:45px;top:143px;color:#333">8</span>
<span class="t" style="left:88px;top:143px;color:#333">Scania 330</span>
<span class="t" style="left:161px;top:143px;color:#333">175:38:41</span>
<span class="t" style="left:235px;top:143px;color:#333">159:03:12</span>
<span class="t" style="left:320px;top:143px;color:#333">16:35:29</span>
<span class="t" style="left:396px;top:143px;color:#333">9.45 %</span>
<span class="t" style="left:479px;top:143px;color:#333">10602.13</span>
<span class="t" style="left:548px;top:143px;color:#333">3924.50</span>
<span class="t" style="left:665px;top:143px;color:#333">37.02</span>
<span class="t" style="left:776px;top:143px;color:#333">2.70</span>
<div class="a" style="left:2px;top:161px;width:37px;height:19px;border-right:1px solid #d5d5d5;border-bottom:1px solid #d5d5d5"></div>
<div class="a" style="left:40px;top:161px;width:42px;height:19px;border-right:1px solid #d5d5d5;border-bottom:1px solid #d5d5d5"></div>
<div class="a" style="left:83px;top:161px;width:72px;height:19px;border-right:1px solid #d5d5d5;border-bottom:1px solid #d5d5d5"></div>
<div class="a" style="left:156px;top:161px;width:73px;height:19px;border-right:1px solid #d5d5d5;border-bottom:1px solid #d5d5d5"></div>
<div class="a" style="left:230px;top:161px;width:84px;height:19px;border-right:1px solid #d5d5d5;border-bottom:1px solid #d5d5d5"></div>
<div class="a" style="left:315px;top:161px;width:75px;height:19px;border-right:1px solid #d5d5d5;border-bottom:1px solid #d5d5d5"></div>
<div class="a" style="left:391px;top:161px;width:82px;height:19px;border-right:1px solid #d5d5d5;border-bottom:1px solid #d5d5d5"></div>
<div class="a" style="left:474px;top:161px;width:68px;height:19px;border-right:1px solid #d5d5d5;border-bottom:1px solid #d5d5d5"></div>
<div class="a" style="left:543px;top:161px;width:116px;height:19px;border-right:1px solid #d5d5d5;border-bottom:1px solid #d5d5d5"></div>
<div class="a" style="left:660px;top:161px;width:110px;height:19px;border-right:1px solid #d5d5d5;border-bottom:1px solid #d5d5d5"></div>
<div class="a" style="left:771px;top:161px;width:60px;height:19px;border-right:1px solid #d5d5d5;border-bottom:1px solid #d5d5d5"></div>
<svg style="left:9px;top:166px" width="9" height="9" viewBox="0 0 9 9"><rect x="0.5" y="0.5" width="8" height="8" fill="#fff" stroke="#1b69a6" stroke-width="1"/><path d="M4.5 2 V7 M2 4.5 H7" stroke="#333" stroke-width="1"/></svg>
<span class="t" style="left:45px;top:163px;color:#333">9</span>
<span class="t" style="left:88px;top:163px;color:#333">Scania 44</span>
<span class="t" style="left:161px;top:163px;color:#333">185:20:42</span>
<span class="t" style="left:235px;top:163px;color:#333">157:41:11</span>
<span class="t" style="left:320px;top:163px;color:#333">27:39:31</span>
<span class="t" style="left:396px;top:163px;color:#333">14.92 %</span>
<span class="t" style="left:479px;top:163px;color:#333">10267.14</span>
<span class="t" style="left:548px;top:163px;color:#333">0.00</span>
<span class="t" style="left:665px;top:163px;color:#333">0.00</span>
<span class="t" style="left:776px;top:163px;color:#333">-----</span>
<div class="a" style="left:2px;top:181px;width:37px;height:19px;border-right:1px solid #d5d5d5;border-bottom:1px solid #d5d5d5"></div>
<div class="a" style="left:40px;top:181px;width:42px;height:19px;border-right:1px solid #d5d5d5;border-bottom:1px solid #d5d5d5"></div>
<div class="a" style="left:83px;top:181px;width:72px;height:19px;border-right:1px solid #d5d5d5;border-bottom:1px solid #d5d5d5"></div>
<div class="a" style="left:156px;top:181px;width:73px;height:19px;border-right:1px solid #d5d5d5;border-bottom:1px solid #d5d5d5"></div>
<div class="a" style="left:230px;top:181px;width:84px;height:19px;border-right:1px solid #d5d5d5;border-bottom:1px solid #d5d5d5"></div>
<div class="a" style="left:315px;top:181px;width:75px;height:19px;border-right:1px solid #d5d5d5;border-bottom:1px solid #d5d5d5"></div>
<div class="a" style="left:391px;top:181px;width:82px;height:19px;border-right:1px solid #d5d5d5;border-bottom:1px solid #d5d5d5"></div>
<div class="a" style="left:474px;top:181px;width:68px;height:19px;border-right:1px solid #d5d5d5;border-bottom:1px solid #d5d5d5"></div>
<div class="a" style="left:543px;top:181px;width:116px;height:19px;border-right:1px solid #d5d5d5;border-bottom:1px solid #d5d5d5"></div>
<div class="a" style="left:660px;top:181px;width:110px;height:19px;border-right:1px solid #d5d5d5;border-bottom:1px solid #d5d5d5"></div>
<div class="a" style="left:771px;top:181px;width:60px;height:19px;border-right:1px solid #d5d5d5;border-bottom:1px solid #d5d5d5"></div>
<svg style="left:9px;top:186px" width="9" height="9" viewBox="0 0 9 9"><rect x="0.5" y="0.5" width="8" height="8" fill="#fff" stroke="#1b69a6" stroke-width="1"/><path d="M4.5 2 V7 M2 4.5 H7" stroke="#333" stroke-width="1"/></svg>
<span class="t" style="left:45px;top:183px;color:#333">10</span>
<span class="t" style="left:88px;top:183px;color:#333">Scania 45</span>
<span class="t" style="left:161px;top:183px;color:#333">171:04:24</span>
<span class="t" style="left:235px;top:183px;color:#333">154:11:05</span>
<span class="t" style="left:320px;top:183px;color:#333">16:53:19</span>
<span class="t" style="left:396px;top:183px;color:#333">9.87 %</span>
<span class="t" style="left:479px;top:183px;color:#333">9938.42</span>
<span class="t" style="left:548px;top:183px;color:#333">4279.00</span>
<span class="t" style="left:665px;top:183px;color:#333">43.06</span>
<span class="t" style="left:776px;top:183px;color:#333">2.32</span>
<div class="a" style="left:2px;top:201px;width:37px;height:19px;border-right:1px solid #d5d5d5;border-bottom:1px solid #d5d5d5"></div>
<div class="a" style="left:40px;top:201px;width:42px;height:19px;border-right:1px solid #d5d5d5;border-bottom:1px solid #d5d5d5"></div>
<div class="a" style="left:83px;top:201px;width:72px;height:19px;border-right:1px solid #d5d5d5;border-bottom:1px solid #d5d5d5"></div>
<div class="a" style="left:156px;top:201px;width:73px;height:19px;border-right:1px solid #d5d5d5;border-bottom:1px solid #d5d5d5"></div>
<div class="a" style="left:230px;top:201px;width:84px;height:19px;border-right:1px solid #d5d5d5;border-bottom:1px solid #d5d5d5"></div>
<div class="a" style="left:315px;top:201px;width:75px;height:19px;border-right:1px solid #d5d5d5;border-bottom:1px solid #d5d5d5"></div>
<div class="a" style="left:391px;top:201px;width:82px;height:19px;border-right:1px solid #d5d5d5;border-bottom:1px solid #d5d5d5"></div>
<div class="a" style="left:474px;top:201px;width:68px;height:19px;border-right:1px solid #d5d5d5;border-bottom:1px solid #d5d5d5"></div>
<div class="a" style="left:543px;top:201px;width:116px;height:19px;border-right:1px solid #d5d5d5;border-bottom:1px solid #d5d5d5"></div>
<div class="a" style="left:660px;top:201px;width:110px;height:19px;border-right:1px solid #d5d5d5;border-bottom:1px solid #d5d5d5"></div>
<div class="a" style="left:771px;top:201px;width:60px;height:19px;border-right:1px solid #d5d5d5;border-bottom:1px solid #d5d5d5"></div>
<svg style="left:9px;top:206px" width="9" height="9" viewBox="0 0 9 9"><rect x="0.5" y="0.5" width="8" height="8" fill="#fff" stroke="#1b69a6" stroke-width="1"/><path d="M4.5 2 V7 M2 4.5 H7" stroke="#333" stroke-width="1"/></svg>
<span class="t" style="left:45px;top:203px;color:#333">11</span>
<span class="t" style="left:88px;top:203px;color:#333">Scania 425</span>
<span class="t" style="left:161px;top:203px;color:#333">164:44:13</span>
<span class="t" style="left:235px;top:203px;color:#333">153:19:59</span>
<span class="t" style="left:320px;top:203px;color:#333">11:24:14</span>
<span class="t" style="left:396px;top:203px;color:#333">6.92 %</span>
<span class="t" style="left:479px;top:203px;color:#333">9930.89</span>
<span class="t" style="left:548px;top:203px;color:#333">3787.50</span>
<span class="t" style="left:665px;top:203px;color:#333">38.14</span>
<span class="t" style="left:776px;top:203px;color:#333">2.62</span>
<div class="a" style="left:2px;top:221px;width:37px;height:19px;border-right:1px solid #d5d5d5;border-bottom:1px solid #d5d5d5"></div>
<div class="a" style="left:40px;top:221px;width:42px;height:19px;border-right:1px solid #d5d5d5;border-bottom:1px solid #d5d5d5"></div>
<div class="a" style="left:83px;top:221px;width:72px;height:19px;border-right:1px solid #d5d5d5;border-bottom:1px solid #d5d5d5"></div>
<div class="a" style="left:156px;top:221px;width:73px;height:19px;border-right:1px solid #d5d5d5;border-bottom:1px solid #d5d5d5"></div>
<div class="a" style="left:230px;top:221px;width:84px;height:19px;border-right:1px solid #d5d5d5;border-bottom:1px solid #d5d5d5"></div>
<div class="a" style="left:315px;top:221px;width:75px;height:19px;border-right:1px solid #d5d5d5;border-bottom:1px solid #d5d5d5"></div>
<div class="a" style="left:391px;top:221px;width:82px;height:19px;border-right:1px solid #d5d5d5;border-bottom:1px solid #d5d5d5"></div>
<div class="a" style="left:474px;top:221px;width:68px;height:19px;border-right:1px solid #d5d5d5;border-bottom:1px solid #d5d5d5"></div>
<div class="a" style="left:543px;top:221px;width:116px;height:19px;border-right:1px solid #d5d5d5;border-bottom:1px solid #d5d5d5"></div>
<div class="a" style="left:660px;top:221px;width:110px;height:19px;border-right:1px solid #d5d5d5;border-bottom:1px solid #d5d5d5"></div>
<div class="a" style="left:771px;top:221px;width:60px;height:19px;border-right:1px solid #d5d5d5;border-bottom:1px solid #d5d5d5"></div>
<svg style="left:9px;top:226px" width="9" height="9" viewBox="0 0 9 9"><rect x="0.5" y="0.5" width="8" height="8" fill="#fff" stroke="#1b69a6" stroke-width="1"/><path d="M4.5 2 V7 M2 4.5 H7" stroke="#333" stroke-width="1"/></svg>
<span class="t" style="left:45px;top:223px;color:#333">12</span>
<span class="t" style="left:88px;top:223px;color:#333">Scania 136</span>
<span class="t" style="left:161px;top:223px;color:#333">170:35:10</span>
<span class="t" style="left:235px;top:223px;color:#333">152:21:13</span>
<span class="t" style="left:320px;top:223px;color:#333">18:13:57</span>
<span class="t" style="left:396px;top:223px;color:#333">10.69 %</span>
<span class="t" style="left:479px;top:223px;color:#333">9618.10</span>
<span class="t" style="left:548px;top:223px;color:#333">0.00</span>
<span class="t" style="left:665px;top:223px;color:#333">0.00</span>
<span class="t" style="left:776px;top:223px;color:#333">-----</span>
<div class="a" style="left:2px;top:241px;width:37px;height:19px;border-right:1px solid #d5d5d5;border-bottom:1px solid #d5d5d5"></div>
<div class="a" style="left:40px;top:241px;width:42px;height:19px;border-right:1px solid #d5d5d5;border-bottom:1px solid #d5d5d5"></div>
<div class="a" style="left:83px;top:241px;width:72px;height:19px;border-right:1px solid #d5d5d5;border-bottom:1px solid #d5d5d5"></div>
<div class="a" style="left:156px;top:241px;width:73px;height:19px;border-right:1px solid #d5d5d5;border-bottom:1px solid #d5d5d5"></div>
<div class="a" style="left:230px;top:241px;width:84px;height:19px;border-right:1px solid #d5d5d5;border-bottom:1px solid #d5d5d5"></div>
<div class="a" style="left:315px;top:241px;width:75px;height:19px;border-right:1px solid #d5d5d5;border-bottom:1px solid #d5d5d5"></div>
<div class="a" style="left:391px;top:241px;width:82px;height:19px;border-right:1px solid #d5d5d5;border-bottom:1px solid #d5d5d5"></div>
<div class="a" style="left:474px;top:241px;width:68px;height:19px;border-right:1px solid #d5d5d5;border-bottom:1px solid #d5d5d5"></div>
<div class="a" style="left:543px;top:241px;width:116px;height:19px;border-right:1px solid #d5d5d5;border-bottom:1px solid #d5d5d5"></div>
<div class="a" style="left:660px;top:241px;width:110px;height:19px;border-right:1px solid #d5d5d5;border-bottom:1px solid #d5d5d5"></div>
<div class="a" style="left:771px;top:241px;width:60px;height:19px;border-right:1px solid #d5d5d5;border-bottom:1px solid #d5d5d5"></div>
<svg style="left:9px;top:246px" width="9" height="9" viewBox="0 0 9 9"><rect x="0.5" y="0.5" width="8" height="8" fill="#fff" stroke="#1b69a6" stroke-width="1"/><path d="M4.5 2 V7 M2 4.5 H7" stroke="#333" stroke-width="1"/></svg>
<span class="t" style="left:45px;top:243px;color:#333">13</span>
<span class="t" style="left:88px;top:243px;color:#333">Scania 509</span>
<span class="t" style="left:161px;top:243px;color:#333">167:42:13</span>
<span class="t" style="left:235px;top:243px;color:#333">152:13:38</span>
<span class="t" style="left:320px;top:243px;color:#333">15:28:35</span>
<span class="t" style="left:396px;top:243px;color:#333">9.23 %</span>
<span class="t" style="left:479px;top:243px;color:#333">10082.13</span>
<span class="t" style="left:548px;top:243px;color:#333">3753.00</span>
<span class="t" style="left:665px;top:243px;color:#333">37.22</span>
<span class="t" style="left:776px;top:243px;color:#333">2.69</span>
<div class="a" style="left:2px;top:261px;width:37px;height:19px;border-right:1px solid #d5d5d5;border-bottom:1px solid #d5d5d5"></div>
<div class="a" style="left:40px;top:261px;width:42px;height:19px;border-right:1px solid #d5d5d5;border-bottom:1px solid #d5d5d5"></div>
<div class="a" style="left:83px;top:261px;width:72px;height:19px;border-right:1px solid #d5d5d5;border-bottom:1px solid #d5d5d5"></div>
<div class="a" style="left:156px;top:261px;width:73px;height:19px;border-right:1px solid #d5d5d5;border-bottom:1px solid #d5d5d5"></div>
<div class="a" style="left:230px;top:261px;width:84px;height:19px;border-right:1px solid #d5d5d5;border-bottom:1px solid #d5d5d5"></div>
<div class="a" style="left:315px;top:261px;width:75px;height:19px;border-right:1px solid #d5d5d5;border-bottom:1px solid #d5d5d5"></div>
<div class="a" style="left:391px;top:261px;width:82px;height:19px;border-right:1px solid #d5d5d5;border-bottom:1px solid #d5d5d5"></div>
<div class="a" style="left:474px;top:261px;width:68px;height:19px;border-right:1px solid #d5d5d5;border-bottom:1px solid #d5d5d5"></div>
<div class="a" style="left:543px;top:261px;width:116px;height:19px;border-right:1px solid #d5d5d5;border-bottom:1px solid #d5d5d5"></div>
<div class="a" style="left:660px;top:261px;width:110px;height:19px;border-right:1px solid #d5d5d5;border-bottom:1px solid #d5d5d5"></div>
<div class="a" style="left:771px;top:261px;width:60px;height:19px;border-right:1px solid #d5d5d5;border-bottom:1px solid #d5d5d5"></div>
<svg style="left:9px;top:266px" width="9" height="9" viewBox="0 0 9 9"><rect x="0.5" y="0.5" width="8" height="8" fill="#fff" stroke="#1b69a6" stroke-width="1"/><path d="M4.5 2 V7 M2 4.5 H7" stroke="#333" stroke-width="1"/></svg>
<span class="t" style="left:45px;top:263px;color:#333">14</span>
<span class="t" style="left:88px;top:263px;color:#333">Scania 516</span>
<span class="t" style="left:161px;top:263px;color:#333">164:38:20</span>
<span class="t" style="left:235px;top:263px;color:#333">149:33:25</span>
<span class="t" style="left:320px;top:263px;color:#333">15:04:55</span>
<span class="t" style="left:396px;top:263px;color:#333">9.16 %</span>
<span class="t" style="left:479px;top:263px;color:#333">8889.83</span>
<span class="t" style="left:548px;top:263px;color:#333">3860.00</span>
<span class="t" style="left:665px;top:263px;color:#333">43.42</span>
<span class="t" style="left:776px;top:263px;color:#333">2.30</span>
<div class="a" style="left:2px;top:281px;width:37px;height:19px;border-right:1px solid #d5d5d5;border-bottom:1px solid #d5d5d5"></div>
<div class="a" style="left:40px;top:281px;width:42px;height:19px;border-right:1px solid #d5d5d5;border-bottom:1px solid #d5d5d5"></div>
<div class="a" style="left:83px;top:281px;width:72px;height:19px;border-right:1px solid #d5d5d5;border-bottom:1px solid #d5d5d5"></div>
<div class="a" style="left:156px;top:281px;width:73px;height:19px;border-right:1px solid #d5d5d5;border-bottom:1px solid #d5d5d5"></div>
<div class="a" style="left:230px;top:281px;width:84px;height:19px;border-right:1px solid #d5d5d5;border-bottom:1px solid #d5d5d5"></div>
<div class="a" style="left:315px;top:281px;width:75px;height:19px;border-right:1px solid #d5d5d5;border-bottom:1px solid #d5d5d5"></div>
<div class="a" style="left:391px;top:281px;width:82px;height:19px;border-right:1px solid #d5d5d5;border-bottom:1px solid #d5d5d5"></div>
<div class="a" style="left:474px;top:281px;width:68px;height:19px;border-right:1px solid #d5d5d5;border-bottom:1px solid #d5d5d5"></div>
<div class="a" style="left:543px;top:281px;width:116px;height:19px;border-right:1px solid #d5d5d5;border-bottom:1px solid #d5d5d5"></div>
<div class="a" style="left:660px;top:281px;width:110px;height:19px;border-right:1px solid #d5d5d5;border-bottom:1px solid #d5d5d5"></div>
<div class="a" style="left:771px;top:281px;width:60px;height:19px;border-right:1px solid #d5d5d5;border-bottom:1px solid #d5d5d5"></div>
<svg style="left:9px;top:286px" width="9" height="9" viewBox="0 0 9 9"><rect x="0.5" y="0.5" width="8" height="8" fill="#fff" stroke="#1b69a6" stroke-width="1"/><path d="M4.5 2 V7 M2 4.5 H7" stroke="#333" stroke-width="1"/></svg>
<span class="t" style="left:45px;top:283px;color:#333">15</span>
<span class="t" style="left:88px;top:283px;color:#333">Scania 519</span>
<span class="t" style="left:161px;top:283px;color:#333">170:42:10</span>
<span class="t" style="left:235px;top:283px;color:#333">148:48:29</span>
<span class="t" style="left:320px;top:283px;color:#333">21:53:41</span>
<span class="t" style="left:396px;top:283px;color:#333">12.83 %</span>
<span class="t" style="left:479px;top:283px;color:#333">8223.21</span>
<span class="t" style="left:548px;top:283px;color:#333">3424.50</span>
<span class="t" style="left:665px;top:283px;color:#333">41.64</span>
<span class="t" style="left:776px;top:283px;color:#333">2.40</span>
<div class="a" style="left:2px;top:301px;width:37px;height:19px;border-right:1px solid #d5d5d5;border-bottom:1px solid #d5d5d5"></div>
<div class="a" style="left:40px;top:301px;width:42px;height:19px;border-right:1px solid #d5d5d5;border-bottom:1px solid #d5d5d5"></div>
<div class="a" style="left:83px;top:301px;width:72px;height:19px;border-right:1px solid #d5d5d5;border-bottom:1px solid #d5d5d5"></div>
<div class="a" style="left:156px;top:301px;width:73px;height:19px;border-right:1px solid #d5d5d5;border-bottom:1px solid #d5d5d5"></div>
<div class="a" style="left:230px;top:301px;width:84px;height:19px;border-right:1px solid #d5d5d5;border-bottom:1px solid #d5d5d5"></div>
<div class="a" style="left:315px;top:301px;width:75px;height:19px;border-right:1px solid #d5d5d5;border-bottom:1px solid #d5d5d5"></div>
<div class="a" style="left:391px;top:301px;width:82px;height:19px;border-right:1px solid #d5d5d5;border-bottom:1px solid #d5d5d5"></div>
<div class="a" style="left:474px;top:301px;width:68px;height:19px;border-right:1px solid #d5d5d5;border-bottom:1px solid #d5d5d5"></div>
<div class="a" style="left:543px;top:301px;width:116px;height:19px;border-right:1px solid #d5d5d5;border-bottom:1px solid #d5d5d5"></div>
<div class="a" style="left:660px;top:301px;width:110px;height:19px;border-right:1px solid #d5d5d5;border-bottom:1px solid #d5d5d5"></div>
<div class="a" style="left:771px;top:301px;width:60px;height:19px;border-right:1px solid #d5d5d5;border-bottom:1px solid #d5d5d5"></div>
<svg style="left:9px;top:306px" width="9" height="9" viewBox="0 0 9 9"><rect x="0.5" y="0.5" width="8" height="8" fill="#fff" stroke="#1b69a6" stroke-width="1"/><path d="M4.5 2 V7 M2 4.5 H7" stroke="#333" stroke-width="1"/></svg>
<span class="t" style="left:45px;top:303px;color:#333">16</span>
<span class="t" style="left:88px;top:303px;color:#333">Scania 411</span>
<span class="t" style="left:161px;top:303px;color:#333">172:05:33</span>
<span class="t" style="left:235px;top:303px;color:#333">142:03:50</span>
<span class="t" style="left:320px;top:303px;color:#333">30:01:43</span>
<span class="t" style="left:396px;top:303px;color:#333">17.45 %</span>
<span class="t" style="left:479px;top:303px;color:#333">8366.02</span>
<span class="t" style="left:548px;top:303px;color:#333">0.00</span>
<span class="t" style="left:665px;top:303px;color:#333">0.00</span>
<span class="t" style="left:776px;top:303px;color:#333">-----</span>
<div class="a" style="left:2px;top:321px;width:37px;height:19px;border-right:1px solid #d5d5d5;border-bottom:1px solid #d5d5d5"></div>
<div class="a" style="left:40px;top:321px;width:42px;height:19px;border-right:1px solid #d5d5d5;border-bottom:1px solid #d5d5d5"></div>
<div class="a" style="left:83px;top:321px;width:72px;height:19px;border-right:1px solid #d5d5d5;border-bottom:1px solid #d5d5d5"></div>
<div class="a" style="left:156px;top:321px;width:73px;height:19px;border-right:1px solid #d5d5d5;border-bottom:1px solid #d5d5d5"></div>
<div class="a" style="left:230px;top:321px;width:84px;height:19px;border-right:1px solid #d5d5d5;border-bottom:1px solid #d5d5d5"></div>
<div class="a" style="left:315px;top:321px;width:75px;height:19px;border-right:1px solid #d5d5d5;border-bottom:1px solid #d5d5d5"></div>
<div class="a" style="left:391px;top:321px;width:82px;height:19px;border-right:1px solid #d5d5d5;border-bottom:1px solid #d5d5d5"></div>
<div class="a" style="left:474px;top:321px;width:68px;height:19px;border-right:1px solid #d5d5d5;border-bottom:1px solid #d5d5d5"></div>
<div class="a" style="left:543px;top:321px;width:116px;height:19px;border-right:1px solid #d5d5d5;border-bottom:1px solid #d5d5d5"></div>
<div class="a" style="left:660px;top:321px;width:110px;height:19px;border-right:1px solid #d5d5d5;border-bottom:1px solid #d5d5d5"></div>
<div class="a" style="left:771px;top:321px;width:60px;height:19px;border-right:1px solid #d5d5d5;border-bottom:1px solid #d5d5d5"></div>
<svg style="left:9px;top:326px" width="9" height="9" viewBox="0 0 9 9"><rect x="0.5" y="0.5" width="8" height="8" fill="#fff" stroke="#1b69a6" stroke-width="1"/><path d="M4.5 2 V7 M2 4.5 H7" stroke="#333" stroke-width="1"/></svg>
<span class="t" style="left:45px;top:323px;color:#333">17</span>
<span class="t" style="left:88px;top:323px;color:#333">Scania 42</span>
<span class="t" style="left:161px;top:323px;color:#333">176:15:40</span>
<span class="t" style="left:235px;top:323px;color:#333">139:00:43</span>
<span class="t" style="left:320px;top:323px;color:#333">37:14:57</span>
<span class="t" style="left:396px;top:323px;color:#333">21.13 %</span>
<span class="t" style="left:479px;top:323px;color:#333">8263.47</span>
<span class="t" style="left:548px;top:323px;color:#333">0.00</span>
<span class="t" style="left:665px;top:323px;color:#333">0.00</span>
<span class="t" style="left:776px;top:323px;color:#333">-----</span>
<div class="a" style="left:2px;top:341px;width:37px;height:19px;border-right:1px solid #d5d5d5;border-bottom:1px solid #d5d5d5"></div>
<div class="a" style="left:40px;top:341px;width:42px;height:19px;border-right:1px solid #d5d5d5;border-bottom:1px solid #d5d5d5"></div>
<div class="a" style="left:83px;top:341px;width:72px;height:19px;border-right:1px solid #d5d5d5;border-bottom:1px solid #d5d5d5"></div>
<div class="a" style="left:156px;top:341px;width:73px;height:19px;border-right:1px solid #d5d5d5;border-bottom:1px solid #d5d5d5"></div>
<div class="a" style="left:230px;top:341px;width:84px;height:19px;border-right:1px solid #d5d5d5;border-bottom:1px solid #d5d5d5"></div>
<div class="a" style="left:315px;top:341px;width:75px;height:19px;border-right:1px solid #d5d5d5;border-bottom:1px solid #d5d5d5"></div>
<div class="a" style="left:391px;top:341px;width:82px;height:19px;border-right:1px solid #d5d5d5;border-bottom:1px solid #d5d5d5"></div>
<div class="a" style="left:474px;top:341px;width:68px;height:19px;border-right:1px solid #d5d5d5;border-bottom:1px solid #d5d5d5"></div>
<div class="a" style="left:543px;top:341px;width:116px;height:19px;border-right:1px solid #d5d5d5;border-bottom:1px solid #d5d5d5"></div>
<div class="a" style="left:660px;top:341px;width:110px;height:19px;border-right:1px solid #d5d5d5;border-bottom:1px solid #d5d5d5"></div>
<div class="a" style="left:771px;top:341px;width:60px;height:19px;border-right:1px solid #d5d5d5;border-bottom:1px solid #d5d5d5"></div>
<svg style="left:9px;top:346px" width="9" height="9" viewBox="0 0 9 9"><rect x="0.5" y="0.5" width="8" height="8" fill="#fff" stroke="#1b69a6" stroke-width="1"/><path d="M4.5 2 V7 M2 4.5 H7" stroke="#333" stroke-width="1"/></svg>
<span class="t" style="left:45px;top:343px;color:#333">18</span>
<span class="t" style="left:88px;top:343px;color:#333">Scania 421</span>
<span class="t" style="left:161px;top:343px;color:#333">161:24:16</span>
<span class="t" style="left:235px;top:343px;color:#333">136:39:35</span>
<span class="t" style="left:320px;top:343px;color:#333">24:44:41</span>
<span class="t" style="left:396px;top:343px;color:#333">15.33 %</span>
<span class="t" style="left:479px;top:343px;color:#333">8249.27</span>
<span class="t" style="left:548px;top:343px;color:#333">3518.50</span>
<span class="t" style="left:665px;top:343px;color:#333">42.65</span>
<span class="t" style="left:776px;top:343px;color:#333">2.34</span>
<div class="a" style="left:2px;top:361px;width:37px;height:19px;border-right:1px solid #d5d5d5;border-bottom:1px solid #d5d5d5"></div>
<div class="a" style="left:40px;top:361px;width:42px;height:19px;border-right:1px solid #d5d5d5;border-bottom:1px solid #d5d5d5"></div>
<div class="a" style="left:83px;top:361px;width:72px;height:19px;border-right:1px solid #d5d5d5;border-bottom:1px solid #d5d5d5"></div>
<div class="a" style="left:156px;top:361px;width:73px;height:19px;border-right:1px solid #d5d5d5;border-bottom:1px solid #d5d5d5"></div>
<div class="a" style="left:230px;top:361px;width:84px;height:19px;border-right:1px solid #d5d5d5;border-bottom:1px solid #d5d5d5"></div>
<div class="a" style="left:315px;top:361px;width:75px;height:19px;border-right:1px solid #d5d5d5;border-bottom:1px solid #d5d5d5"></div>
<div class="a" style="left:391px;top:361px;width:82px;height:19px;border-right:1px solid #d5d5d5;border-bottom:1px solid #d5d5d5"></div>
<div class="a" style="left:474px;top:361px;width:68px;height:19px;border-right:1px solid #d5d5d5;border-bottom:1px solid #d5d5d5"></div>
<div class="a" style="left:543px;top:361px;width:116px;height:19px;border-right:1px solid #d5d5d5;border-bottom:1px solid #d5d5d5"></div>
<div class="a" style="left:660px;top:361px;width:110px;height:19px;border-right:1px solid #d5d5d5;border-bottom:1px solid #d5d5d5"></div>
<div class="a" style="left:771px;top:361px;width:60px;height:19px;border-right:1px solid #d5d5d5;border-bottom:1px solid #d5d5d5"></div>
<svg style="left:9px;top:366px" width="9" height="9" viewBox="0 0 9 9"><rect x="0.5" y="0.5" width="8" height="8" fill="#fff" stroke="#1b69a6" stroke-width="1"/><path d="M4.5 2 V7 M2 4.5 H7" stroke="#333" stroke-width="1"/></svg>
<span class="t" style="left:45px;top:363px;color:#333">19</span>
<span class="t" style="left:88px;top:363px;color:#333">Scania 331</span>
<span class="t" style="left:161px;top:363px;color:#333">155:01:38</span>
<span class="t" style="left:235px;top:363px;color:#333">135:56:24</span>
<span class="t" style="left:320px;top:363px;color:#333">19:05:14</span>
<span class="t" style="left:396px;top:363px;color:#333">12.31 %</span>
<span class="t" style="left:479px;top:363px;color:#333">7355.11</span>
<span class="t" style="left:548px;top:363px;color:#333">3080.50</span>
<span class="t" style="left:665px;top:363px;color:#333">41.88</span>
<span class="t" style="left:776px;top:363px;color:#333">2.39</span>
<div class="a" style="left:2px;top:381px;width:37px;height:19px;border-right:1px solid #d5d5d5;border-bottom:1px solid #d5d5d5"></div>
<div class="a" style="left:40px;top:381px;width:42px;height:19px;border-right:1px solid #d5d5d5;border-bottom:1px solid #d5d5d5"></div>
<div class="a" style="left:83px;top:381px;width:72px;height:19px;border-right:1px solid #d5d5d5;border-bottom:1px solid #d5d5d5"></div>
<div class="a" style="left:156px;top:381px;width:73px;height:19px;border-right:1px solid #d5d5d5;border-bottom:1px solid #d5d5d5"></div>
<div class="a" style="left:230px;top:381px;width:84px;height:19px;border-right:1px solid #d5d5d5;border-bottom:1px solid #d5d5d5"></div>
<div class="a" style="left:315px;top:381px;width:75px;height:19px;border-right:1px solid #d5d5d5;border-bottom:1px solid #d5d5d5"></div>
<div class="a" style="left:391px;top:381px;width:82px;height:19px;border-right:1px solid #d5d5d5;border-bottom:1px solid #d5d5d5"></div>
<div class="a" style="left:474px;top:381px;width:68px;height:19px;border-right:1px solid #d5d5d5;border-bottom:1px solid #d5d5d5"></div>
<div class="a" style="left:543px;top:381px;width:116px;height:19px;border-right:1px solid #d5d5d5;border-bottom:1px solid #d5d5d5"></div>
<div class="a" style="left:660px;top:381px;width:110px;height:19px;border-right:1px solid #d5d5d5;border-bottom:1px solid #d5d5d5"></div>
<div class="a" style="left:771px;top:381px;width:60px;height:19px;border-right:1px solid #d5d5d5;border-bottom:1px solid #d5d5d5"></div>
<svg style="left:9px;top:386px" width="9" height="9" viewBox="0 0 9 9"><rect x="0.5" y="0.5" width="8" height="8" fill="#fff" stroke="#1b69a6" stroke-width="1"/><path d="M4.5 2 V7 M2 4.5 H7" stroke="#333" stroke-width="1"/></svg>
<span class="t" style="left:45px;top:383px;color:#333">20</span>
<span class="t" style="left:88px;top:383px;color:#333">Scania 520</span>
<span class="t" style="left:161px;top:383px;color:#333">156:32:59</span>
<span class="t" style="left:235px;top:383px;color:#333">134:08:33</span>
<span class="t" style="left:320px;top:383px;color:#333">22:24:26</span>
<span class="t" style="left:396px;top:383px;color:#333">14.31 %</span>
<span class="t" style="left:479px;top:383px;color:#333">7432.65</span>
<span class="t" style="left:548px;top:383px;color:#333">3195.50</span>
<span class="t" style="left:665px;top:383px;color:#333">42.99</span>
<span class="t" style="left:776px;top:383px;color:#333">2.33</span>
<div class="a" style="left:2px;top:401px;width:37px;height:19px;border-right:1px solid #d5d5d5;border-bottom:1px solid #d5d5d5"></div>
<div class="a" style="left:40px;top:401px;width:42px;height:19px;border-right:1px solid #d5d5d5;border-bottom:1px solid #d5d5d5"></div>
<div class="a" style="left:83px;top:401px;width:72px;height:19px;border-right:1px solid #d5d5d5;border-bottom:1px solid #d5d5d5"></div>
<div class="a" style="left:156px;top:401px;width:73px;height:19px;border-right:1px solid #d5d5d5;border-bottom:1px solid #d5d5d5"></div>
<div class="a" style="left:230px;top:401px;width:84px;height:19px;border-right:1px solid #d5d5d5;border-bottom:1px solid #d5d5d5"></div>
<div class="a" style="left:315px;top:401px;width:75px;height:19px;border-right:1px solid #d5d5d5;border-bottom:1px solid #d5d5d5"></div>
<div class="a" style="left:391px;top:401px;width:82px;height:19px;border-right:1px solid #d5d5d5;border-bottom:1px solid #d5d5d5"></div>
<div class="a" style="left:474px;top:401px;width:68px;height:19px;border-right:1px solid #d5d5d5;border-bottom:1px solid #d5d5d5"></div>
<div class="a" style="left:543px;top:401px;width:116px;height:19px;border-right:1px solid #d5d5d5;border-bottom:1px solid #d5d5d5"></div>
<div class="a" style="left:660px;top:401px;width:110px;height:19px;border-right:1px solid #d5d5d5;border-bottom:1px solid #d5d5d5"></div>
<div class="a" style="left:771px;top:401px;width:60px;height:19px;border-right:1px solid #d5d5d5;border-bottom:1px solid #d5d5d5"></div>
<svg style="left:9px;top:406px" width="9" height="9" viewBox="0 0 9 9"><rect x="0.5" y="0.5" width="8" height="8" fill="#fff" stroke="#1b69a6" stroke-width="1"/><path d="M4.5 2 V7 M2 4.5 H7" stroke="#333" stroke-width="1"/></svg>
<span class="t" style="left:45px;top:403px;color:#333">21</span>
<span class="t" style="left:88px;top:403px;color:#333">Scania 237</span>
<span class="t" style="left:161px;top:403px;color:#333">154:35:02</span>
<span class="t" style="left:235px;top:403px;color:#333">132:52:00</span>
<span class="t" style="left:320px;top:403px;color:#333">21:43:02</span>
<span class="t" style="left:396px;top:403px;color:#333">14.05 %</span>
<span class="t" style="left:479px;top:403px;color:#333">8367.18</span>
<span class="t" style="left:548px;top:403px;color:#333">3269.00</span>
<span class="t" style="left:665px;top:403px;color:#333">39.07</span>
<span class="t" style="left:776px;top:403px;color:#333">2.56</span>
<div class="a" style="left:2px;top:421px;width:37px;height:19px;border-right:1px solid #d5d5d5;border-bottom:1px solid #d5d5d5"></div>
<div class="a" style="left:40px;top:421px;width:42px;height:19px;border-right:1px solid #d5d5d5;border-bottom:1px solid #d5d5d5"></div>
<div class="a" style="left:83px;top:421px;width:72px;height:19px;border-right:1px solid #d5d5d5;border-bottom:1px solid #d5d5d5"></div>
<div class="a" style="left:156px;top:421px;width:73px;height:19px;border-right:1px solid #d5d5d5;border-bottom:1px solid #d5d5d5"></div>
<div class="a" style="left:230px;top:421px;width:84px;height:19px;border-right:1px solid #d5d5d5;border-bottom:1px solid #d5d5d5"></div>
<div class="a" style="left:315px;top:421px;width:75px;height:19px;border-right:1px solid #d5d5d5;border-bottom:1px solid #d5d5d5"></div>
<div class="a" style="left:391px;top:421px;width:82px;height:19px;border-right:1px solid #d5d5d5;border-bottom:1px solid #d5d5d5"></div>
<div class="a" style="left:474px;top:421px;width:68px;height:19px;border-right:1px solid #d5d5d5;border-bottom:1px solid #d5d5d5"></div>
<div class="a" style="left:543px;top:421px;width:116px;height:19px;border-right:1px solid #d5d5d5;border-bottom:1px solid #d5d5d5"></div>
<div class="a" style="left:660px;top:421px;width:110px;height:19px;border-right:1px solid #d5d5d5;border-bottom:1px solid #d5d5d5"></div>
<div class="a" style="left:771px;top:421px;width:60px;height:19px;border-right:1px solid #d5d5d5;border-bottom:1px solid #d5d5d5"></div>
<svg style="left:9px;top:426px" width="9" height="9" viewBox="0 0 9 9"><rect x="0.5" y="0.5" width="8" height="8" fill="#fff" stroke="#1b69a6" stroke-width="1"/><path d="M4.5 2 V7 M2 4.5 H7" stroke="#333" stroke-width="1"/></svg>
<span class="t" style="left:45px;top:423px;color:#333">22</span>
<span class="t" style="left:88px;top:423px;color:#333">Scania 235</span>
<span class="t" style="left:161px;top:423px;color:#333">146:50:48</span>
<span class="t" style="left:235px;top:423px;color:#333">131:04:05</span>
<span class="t" style="left:320px;top:423px;color:#333">15:46:43</span>
<span class="t" style="left:396px;top:423px;color:#333">10.74 %</span>
<span class="t" style="left:479px;top:423px;color:#333">7270.47</span>
<span class="t" style="left:548px;top:423px;color:#333">3112.50</span>
<span class="t" style="left:665px;top:423px;color:#333">42.81</span>
<span class="t" style="left:776px;top:423px;color:#333">2.34</span>
<div class="a" style="left:2px;top:441px;width:37px;height:19px;border-right:1px solid #d5d5d5;border-bottom:1px solid #d5d5d5"></div>
<div class="a" style="left:40px;top:441px;width:42px;height:19px;border-right:1px solid #d5d5d5;border-bottom:1px solid #d5d5d5"></div>
<div class="a" style="left:83px;top:441px;width:72px;height:19px;border-right:1px solid #d5d5d5;border-bottom:1px solid #d5d5d5"></div>
<div class="a" style="left:156px;top:441px;width:73px;height:19px;border-right:1px solid #d5d5d5;border-bottom:1px solid #d5d5d5"></div>
<div class="a" style="left:230px;top:441px;width:84px;height:19px;border-right:1px solid #d5d5d5;border-bottom:1px solid #d5d5d5"></div>
<div class="a" style="left:315px;top:441px;width:75px;height:19px;border-right:1px solid #d5d5d5;border-bottom:1px solid #d5d5d5"></div>
<div class="a" style="left:391px;top:441px;width:82px;height:19px;border-right:1px solid #d5d5d5;border-bottom:1px solid #d5d5d5"></div>
<div class="a" style="left:474px;top:441px;width:68px;height:19px;border-right:1px solid #d5d5d5;border-bottom:1px solid #d5d5d5"></div>
<div class="a" style="left:543px;top:441px;width:116px;height:19px;border-right:1px solid #d5d5d5;border-bottom:1px solid #d5d5d5"></div>
<div class="a" style="left:660px;top:441px;width:110px;height:19px;border-right:1px solid #d5d5d5;border-bottom:1px solid #d5d5d5"></div>
<div class="a" style="left:771px;top:441px;width:60px;height:19px;border-right:1px solid #d5d5d5;border-bottom:1px solid #d5d5d5"></div>
<svg style="left:9px;top:446px" width="9" height="9" viewBox="0 0 9 9"><rect x="0.5" y="0.5" width="8" height="8" fill="#fff" stroke="#1b69a6" stroke-width="1"/><path d="M4.5 2 V7 M2 4.5 H7" stroke="#333" stroke-width="1"/></svg>
<span class="t" style="left:45px;top:443px;color:#333">23</span>
<span class="t" style="left:88px;top:443px;color:#333">Scania 518</span>
<span class="t" style="left:161px;top:443px;color:#333">145:24:16</span>
<span class="t" style="left:235px;top:443px;color:#333">129:35:26</span>
<span class="t" style="left:320px;top:443px;color:#333">15:48:50</span>
<span class="t" style="left:396px;top:443px;color:#333">10.88 %</span>
<span class="t" style="left:479px;top:443px;color:#333">8502.45</span>
<span class="t" style="left:548px;top:443px;color:#333">3256.50</span>
<span class="t" style="left:665px;top:443px;color:#333">38.30</span>
<span class="t" style="left:776px;top:443px;color:#333">2.61</span>
<div class="a" style="left:2px;top:461px;width:37px;height:19px;border-right:1px solid #d5d5d5;border-bottom:1px solid #d5d5d5"></div>
<div class="a" style="left:40px;top:461px;width:42px;height:19px;border-right:1px solid #d5d5d5;border-bottom:1px solid #d5d5d5"></div>
<div class="a" style="left:83px;top:461px;width:72px;height:19px;border-right:1px solid #d5d5d5;border-bottom:1px solid #d5d5d5"></div>
<div class="a" style="left:156px;top:461px;width:73px;height:19px;border-right:1px solid #d5d5d5;border-bottom:1px solid #d5d5d5"></div>
<div class="a" style="left:230px;top:461px;width:84px;height:19px;border-right:1px solid #d5d5d5;border-bottom:1px solid #d5d5d5"></div>
<div class="a" style="left:315px;top:461px;width:75px;height:19px;border-right:1px solid #d5d5d5;border-bottom:1px solid #d5d5d5"></div>
<div class="a" style="left:391px;top:461px;width:82px;height:19px;border-right:1px solid #d5d5d5;border-bottom:1px solid #d5d5d5"></div>
<div class="a" style="left:474px;top:461px;width:68px;height:19px;border-right:1px solid #d5d5d5;border-bottom:1px solid #d5d5d5"></div>
<div class="a" style="left:543px;top:461px;width:116px;height:19px;border-right:1px solid #d5d5d5;border-bottom:1px solid #d5d5d5"></div>
<div class="a" style="left:660px;top:461px;width:110px;height:19px;border-right:1px solid #d5d5d5;border-bottom:1px solid #d5d5d5"></div>
<div class="a" style="left:771px;top:461px;width:60px;height:19px;border-right:1px solid #d5d5d5;border-bottom:1px solid #d5d5d5"></div>
<svg style="left:9px;top:466px" width="9" height="9" viewBox="0 0 9 9"><rect x="0.5" y="0.5" width="8" height="8" fill="#fff" stroke="#1b69a6" stroke-width="1"/><path d="M4.5 2 V7 M2 4.5 H7" stroke="#333" stroke-width="1"/></svg>
<span class="t" style="left:45px;top:463px;color:#333">24</span>
<span class="t" style="left:88px;top:463px;color:#333">Scania 43</span>
<span class="t" style="left:161px;top:463px;color:#333">161:24:08</span>
<span class="t" style="left:235px;top:463px;color:#333">128:34:56</span>
<span class="t" style="left:320px;top:463px;color:#333">32:50:12</span>
<span class="t" style="left:396px;top:463px;color:#333">20.42 %</span>
<span class="t" style="left:479px;top:463px;color:#333">7073.81</span>
<span class="t" style="left:548px;top:463px;color:#333">0.00</span>
<span class="t" style="left:665px;top:463px;color:#333">0.00</span>
<span class="t" style="left:776px;top:463px;color:#333">-----</span>
</div>
<div class="a" style="left:400px;top:601px;width:1196px;height:1px;background:#d6d6d6"></div>
<div class="a" style="left:402px;top:603px;width:1194px;height:23px;background:#f4f4f4"></div>
<div class="a" style="left:438px;top:603px;width:1px;height:23px;background:#d5d5d5"></div>
<div class="a" style="left:481px;top:603px;width:1px;height:23px;background:#d5d5d5"></div>
<div class="a" style="left:554px;top:603px;width:1px;height:23px;background:#d5d5d5"></div>
<div class="a" style="left:628px;top:603px;width:1px;height:23px;background:#d5d5d5"></div>
<div class="a" style="left:713px;top:603px;width:1px;height:23px;background:#d5d5d5"></div>
<div class="a" style="left:789px;top:603px;width:1px;height:23px;background:#d5d5d5"></div>
<div class="a" style="left:872px;top:603px;width:1px;height:23px;background:#d5d5d5"></div>
<div class="a" style="left:941px;top:603px;width:1px;height:23px;background:#d5d5d5"></div>
<div class="a" style="left:1058px;top:603px;width:1px;height:23px;background:#d5d5d5"></div>
<div class="a" style="left:1169px;top:603px;width:1px;height:23px;background:#d5d5d5"></div>
<div class="a" style="left:1230px;top:603px;width:1px;height:23px;background:#d5d5d5"></div>
<span class="t " style="left:445px;top:607px;color:#222">-----</span>
<span class="t " style="left:488px;top:607px;font-weight:bold;color:#222">Total</span>
<span class="t " style="left:561px;top:607px;font-weight:bold;color:#222">4083:35:02</span>
<span class="t " style="left:635px;top:607px;font-weight:bold;color:#222">3591:09:38</span>
<span class="t " style="left:720px;top:607px;font-weight:bold;color:#222">492:24:31</span>
<span class="t " style="left:796px;top:607px;font-weight:bold;color:#222">12.06 %</span>
<span class="t " style="left:879px;top:607px;font-weight:bold;color:#222">223818.92</span>
<span class="t " style="left:948px;top:607px;font-weight:bold;color:#222">67096.50</span>
<span class="t " style="left:1065px;top:607px;font-weight:bold;color:#222">29.98</span>
<span class="t " style="left:1176px;top:607px;font-weight:bold;color:#222">3.34</span>
<div class="a" style="left:400px;top:627px;width:1196px;height:1px;background:#dedede"></div>
<div class="a" style="left:1576px;top:132px;width:20px;height:469px;background:#f0f0f0"></div>
<svg style="left:1581px;top:140px" width="10" height="6" viewBox="0 0 10 6"><path d="M0 5.5 L5 0.5 L10 5.5Z" fill="#a0a0a0"/></svg>
<div class="a" style="left:1577px;top:153px;width:17px;height:303px;background:#c1c1c1"></div>
<svg style="left:1581px;top:587px" width="10" height="6" viewBox="0 0 10 6"><path d="M0 0.5 L10 0.5 L5 5.5Z" fill="#505050"/></svg>
<div class="a" style="left:872px;top:130px;width:70px;height:24px;border:5px solid #ed1c24"></div>
<div class="a" style="left:872px;top:601px;width:73px;height:28px;border:5px solid #ed1c24"></div>
<div class="a" style="left:0px;top:632px;width:1599px;height:1px;background:#b5b5b5"></div>
<div class="a" style="left:0px;top:633px;width:1599px;height:26px;background:#535353"></div>
<div class="a" style="left:0px;top:633px;width:1px;height:26px;background:#b5b5b5"></div>
<div class="a" style="left:0px;top:659px;width:1599px;height:2px;background:#d5d5d5"></div>
<div class="a" style="left:0px;top:661px;width:1599px;height:4px;background:#000"></div>
<div class="a" style="left:39px;top:633px;width:1px;height:26px;background:#bdbdbd"></div>
<div class="a" style="left:74px;top:633px;width:1px;height:26px;background:#bdbdbd"></div>
<div class="a" style="left:1266px;top:633px;width:1px;height:26px;background:#bdbdbd"></div>
<div class="a" style="left:1436px;top:633px;width:1px;height:26px;background:#bdbdbd"></div>
<div class="a" style="left:1477px;top:633px;width:1px;height:26px;background:#bdbdbd"></div>
<svg style="left:12px;top:638px" width="17" height="15" viewBox="0 0 17 15"><rect x="0" y="0" width="17" height="15" fill="#fff"/><rect x="6" y="2" width="9" height="11" fill="#535353"/></svg>
<svg style="left:0px;top:0px;width:1599px;height:665px" width="1599" height="665" viewBox="0 0 1599 665"><rect x="49.6" y="639" width="4.7" height="4" fill="#fff"/><rect x="54.85" y="639" width="4.7" height="4" fill="#fff"/><rect x="60.1" y="639" width="4.7" height="4" fill="#fff"/><rect x="49.6" y="644" width="4.7" height="4" fill="#fff"/><rect x="54.85" y="644" width="4.7" height="4" fill="#fff"/><rect x="60.1" y="644" width="4.7" height="4" fill="#fff"/><rect x="49.6" y="649" width="4.7" height="4" fill="#fff"/><rect x="54.85" y="649" width="4.7" height="4" fill="#fff"/><rect x="60.1" y="649" width="4.7" height="4" fill="#fff"/></svg>
<span class="t" style="left:0;width:1335px;text-align:center;top:640px;font-weight:bold;color:#fff">&copy; Gurtam</span>
<svg style="left:1276px;top:636px" width="24" height="20" viewBox="1276 636 24 20"><rect x="1278.5" y="639" width="18" height="13.7" fill="#a9a9a9"/><rect x="1280" y="640.5" width="15" height="2" fill="#535353"/>
<path d="M1283 646.5 H1292 M1283 649.3 H1288" stroke="#535353" stroke-width="1"/></svg>
<div class="a" style="left:1300px;top:637px;width:18px;height:16px;border-radius:8px;background:#707070"></div>
<span class="t" style="left:1300px;width:18px;text-align:center;top:638px;color:#e6e6e6">0</span>
<svg style="left:1327px;top:636px" width="28" height="20" viewBox="1327 636 28 20"><rect x="1329" y="639" width="17" height="11.7" fill="#a9a9a9"/><path d="M1330 640 L1337.5 646 L1345 640" fill="none" stroke="#535353" stroke-width="1"/>
<path d="M1344 645 H1353" stroke="#535353" stroke-width="3.5"/><path d="M1345 645 H1352.5" stroke="#a9a9a9" stroke-width="1.6"/><path d="M1347.5 642 L1344.5 645 L1347.5 648 Z" fill="#a9a9a9"/>
<path d="M1339.5 649.5 H1347.5" stroke="#a9a9a9" stroke-width="1.6"/><path d="M1345 646.5 L1348 649.5 L1345 652.5 Z" fill="#a9a9a9"/></svg>
<div class="a" style="left:1356px;top:637px;width:18px;height:16px;border-radius:8px;background:#707070"></div>
<span class="t" style="left:1356px;width:18px;text-align:center;top:638px;color:#e6e6e6">0</span>
<svg style="left:1383px;top:636px" width="22" height="20" viewBox="1383 636 22 20"><rect x="1385.5" y="639" width="16.5" height="13.7" fill="#a9a9a9"/>
<path d="M1387 651 L1391.5 646 L1394.5 648.5 L1397 646.5 L1400.5 651 Z" fill="#535353"/><circle cx="1389.6" cy="642.8" r="1.1" fill="#535353"/></svg>
<div class="a" style="left:1406px;top:637px;width:18px;height:16px;border-radius:8px;background:#707070"></div>
<span class="t" style="left:1406px;width:18px;text-align:center;top:638px;color:#e6e6e6">0</span>
<svg style="left:1444px;top:638px" width="26" height="16" viewBox="1444 638 26 16"><rect x="1446.5" y="641" width="20.3" height="11" fill="#a0a0a0"/><rect x="1456" y="641" width="1.1" height="11" fill="#6a6a6a"/>
<path d="M1449 643.5 H1453.5 M1449 646.5 H1453.5 M1449 649.5 H1451.5" stroke="#535353" stroke-width="1"/></svg>
<span class="t " style="left:1498px;top:639px;color:#fff">08:52:47 (+02)</span>
</body></html>
